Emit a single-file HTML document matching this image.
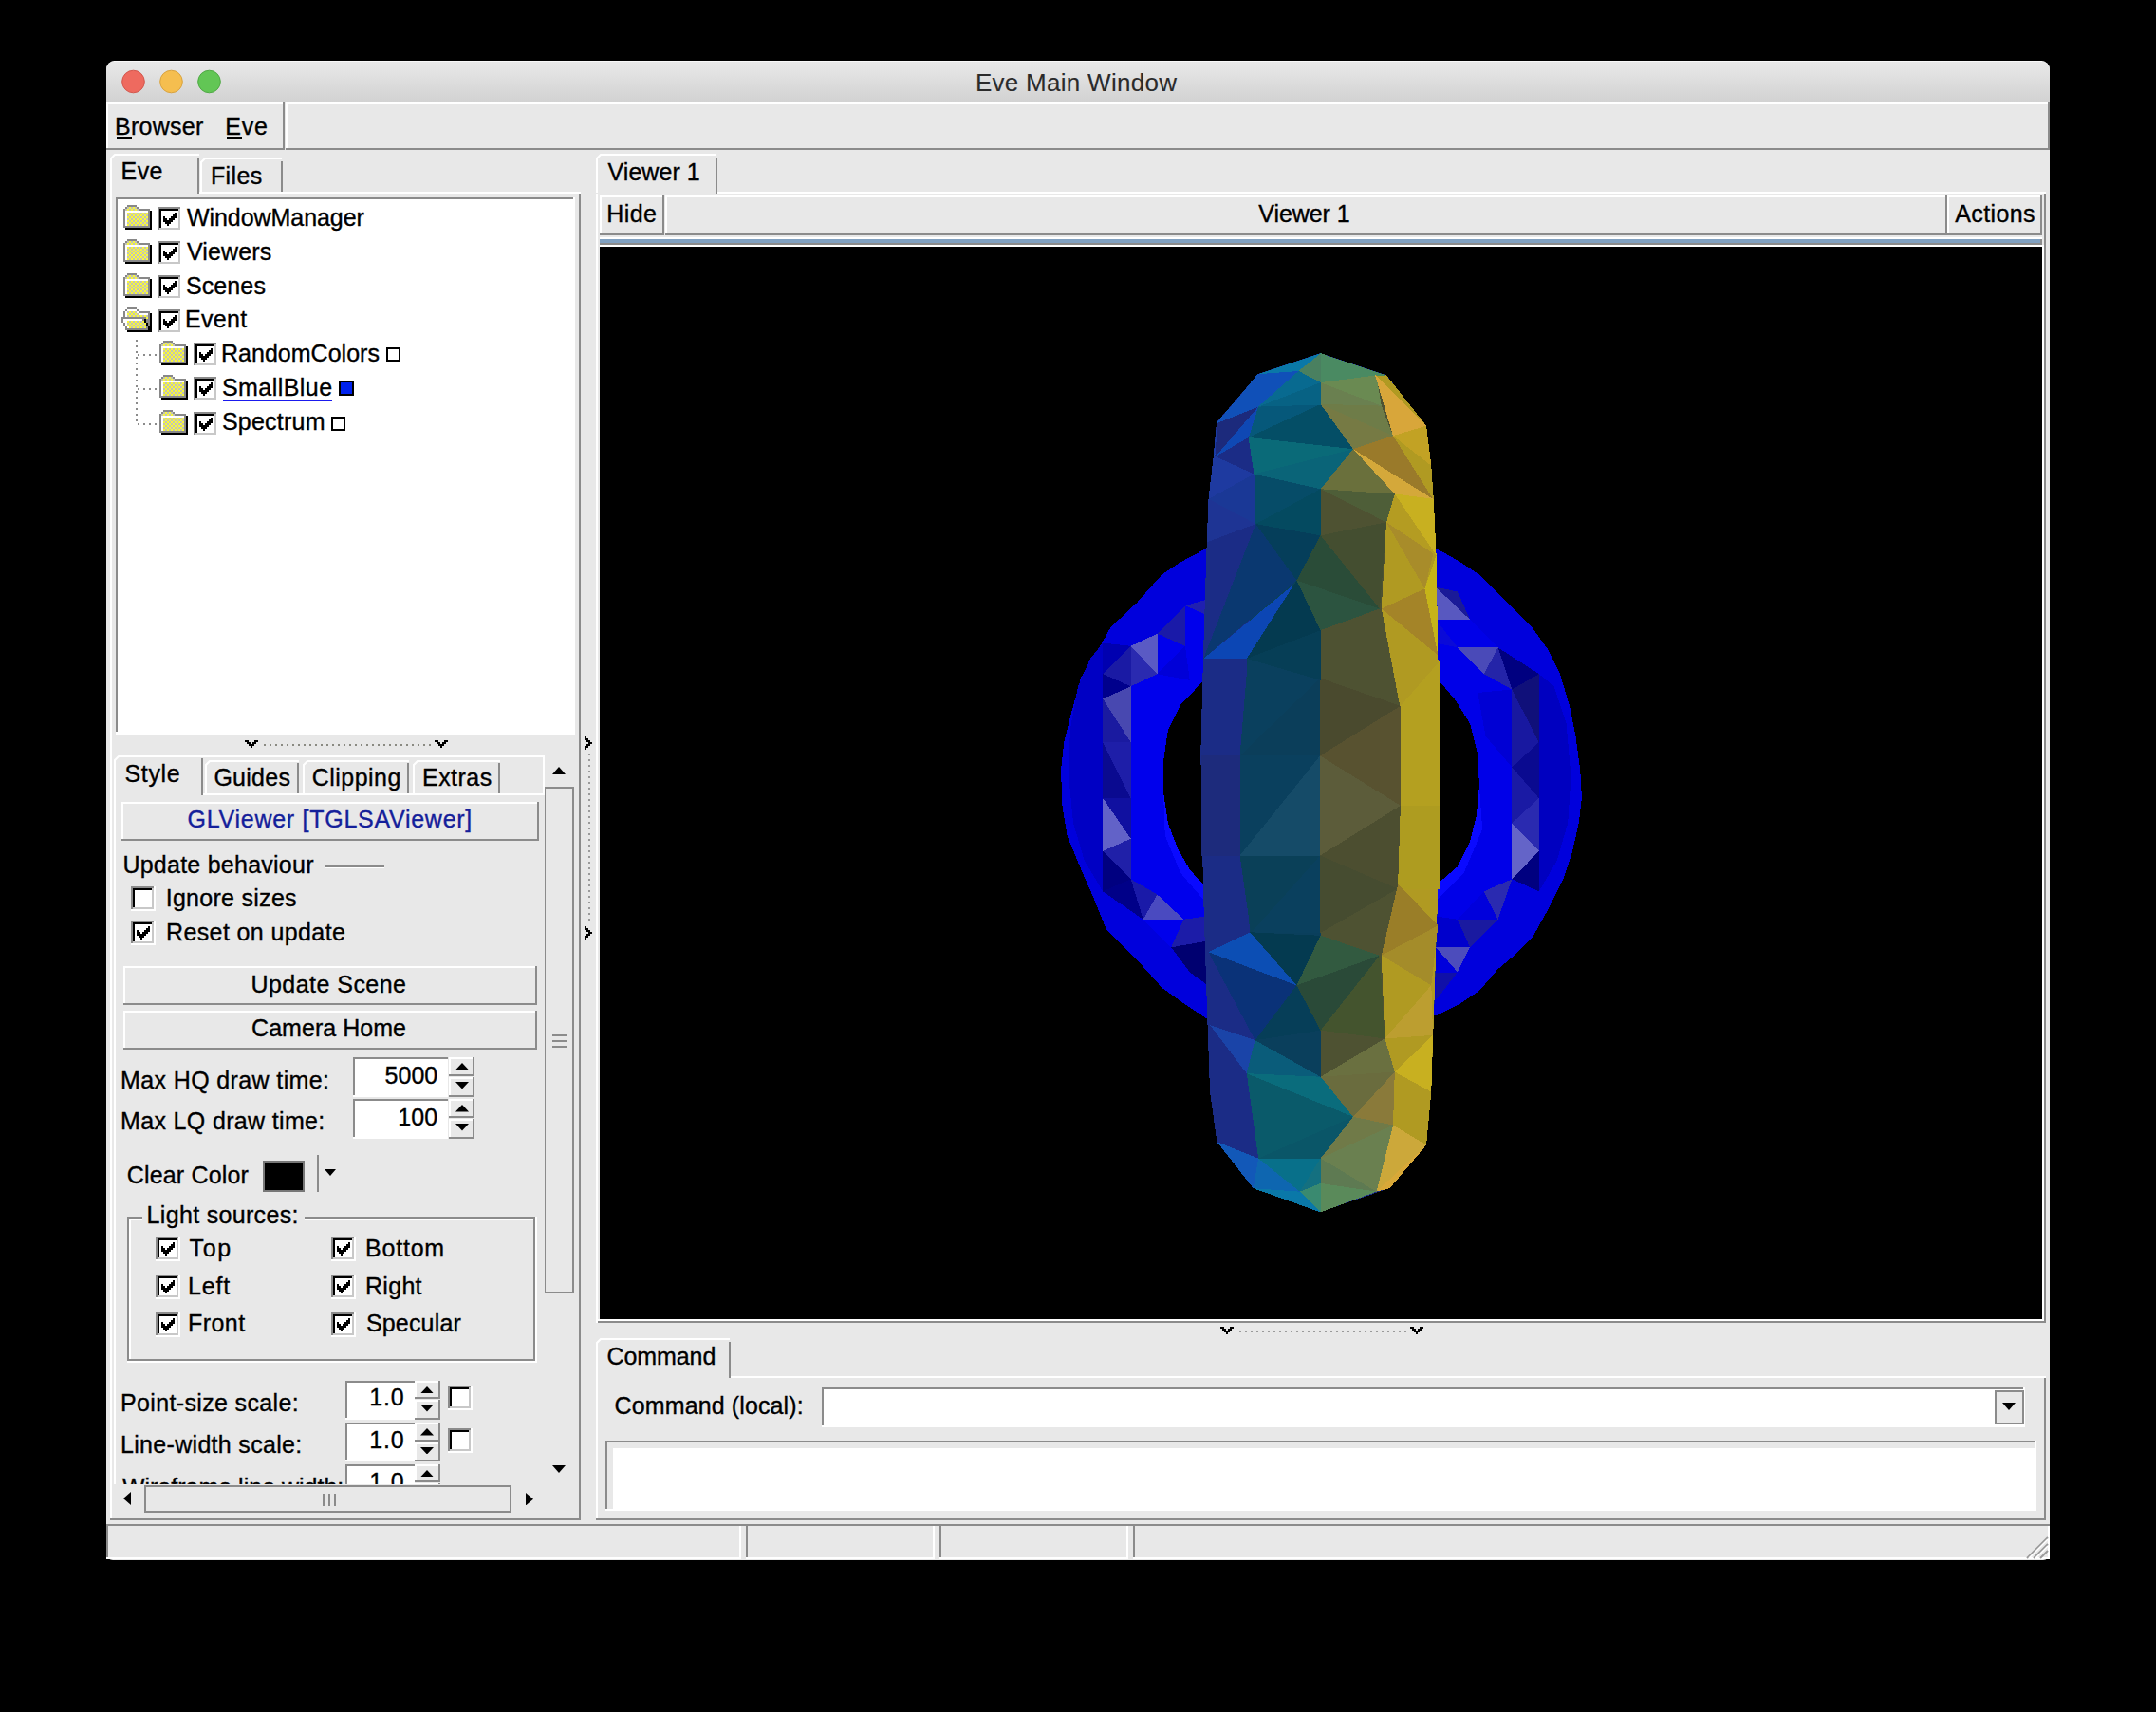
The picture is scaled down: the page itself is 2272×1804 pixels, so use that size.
<!DOCTYPE html>
<html><head><meta charset="utf-8"><style>
html,body{margin:0;padding:0;background:#000;}
body{width:2272px;height:1804px;position:relative;overflow:hidden;font-family:"Liberation Sans",sans-serif;}
#root div,#root svg{position:absolute;}
#root .t{white-space:nowrap;-webkit-text-stroke:0.35px currentColor;}
</style></head><body><div id="root">
<svg width="0" height="0" style="position:absolute"><defs>
<pattern id="chk" width="4" height="4" patternUnits="userSpaceOnUse"><rect width="4" height="4" fill="#bcbcae"/><rect width="2" height="2" fill="#f6f640"/><rect x="2" y="2" width="2" height="2" fill="#f6f640"/></pattern>
</defs></svg>
<div style="left:112px;top:64px;width:2048px;height:1580px;background:#e8e8e8;border-radius:9px 9px 7px 7px;overflow:hidden"></div>
<div style="left:112px;top:64px;width:2048px;height:43px;background:linear-gradient(#e9e9e9,#d2d2d2);border-radius:9px 9px 0 0"></div>
<div style="left:120px;top:64px;width:2032px;height:1px;background:rgba(255,255,255,0.7);"></div>
<div style="left:112px;top:107px;width:2048px;height:1px;background:#adadad;"></div>
<svg style="left:127.8px;top:73px" width="26" height="26"><circle cx="12.5" cy="13" r="11.8" fill="#ee6a5f" stroke="#d3574d" stroke-width="1"/></svg>
<svg style="left:167.8px;top:73px" width="26" height="26"><circle cx="12.5" cy="13" r="11.8" fill="#f5be4f" stroke="#d9a33e" stroke-width="1"/></svg>
<svg style="left:207.8px;top:73px" width="26" height="26"><circle cx="12.5" cy="13" r="11.8" fill="#62c655" stroke="#4fa944" stroke-width="1"/></svg>
<div class="t" style="left:1027.90px;top:73.99px;font-size:26.00px;line-height:26.00px;letter-spacing:0.286px;color:#2b2b2b;-webkit-text-stroke:0.1px #2b2b2b">Eve Main Window</div>
<div style="left:112px;top:108px;width:186px;height:2px;background:#ffffff;"></div>
<div style="left:112px;top:108px;width:2px;height:48px;background:#ffffff;"></div>
<div style="left:112px;top:156px;width:188px;height:2px;background:#8b8b8b;"></div>
<div style="left:298px;top:108px;width:2px;height:50px;background:#8b8b8b;"></div>
<div style="left:301px;top:108px;width:1857px;height:2px;background:#ffffff;"></div>
<div style="left:301px;top:108px;width:2px;height:48px;background:#ffffff;"></div>
<div style="left:301px;top:156px;width:1859px;height:2px;background:#8b8b8b;"></div>
<div style="left:2158px;top:108px;width:2px;height:50px;background:#8b8b8b;"></div>
<div class="t" style="left:121.00px;top:121.04px;font-size:25.00px;line-height:25.00px;letter-spacing:0.283px;color:#000;">Browser</div>
<div style="left:123px;top:144px;width:16px;height:2px;background:#000;"></div>
<div class="t" style="left:237.30px;top:121.04px;font-size:25.00px;line-height:25.00px;letter-spacing:0.750px;color:#000;">Eve</div>
<div style="left:239.3px;top:144px;width:15.7px;height:2px;background:#000;"></div>
<div style="left:116px;top:204px;width:2px;height:1398px;background:#ffffff;"></div>
<div style="left:210px;top:202px;width:402px;height:2px;background:#ffffff;"></div>
<div style="left:610px;top:204px;width:2px;height:1398px;background:#8b8b8b;"></div>
<div style="left:116px;top:1600px;width:496px;height:2px;background:#8b8b8b;"></div>
<svg style="left:116px;top:162px" width="96" height="44"><polyline points="1,43 1,5 5,1 94,1" fill="none" stroke="#fff" stroke-width="2"/></svg>
<div style="left:208px;top:166px;width:2px;height:38px;background:#8b8b8b;"></div>
<div class="t" style="left:127.60px;top:168.34px;font-size:25.00px;line-height:25.00px;letter-spacing:0.400px;color:#000;">Eve</div>
<svg style="left:211px;top:166px" width="88" height="38"><polyline points="1,37 1,5 5,1 86,1" fill="none" stroke="#fff" stroke-width="2"/></svg>
<div style="left:296px;top:170px;width:2px;height:32px;background:#8b8b8b;"></div>
<div class="t" style="left:222.00px;top:172.54px;font-size:25.00px;line-height:25.00px;letter-spacing:0.350px;color:#000;">Files</div>
<div style="left:122px;top:208px;width:484px;height:566px;background:#fff;"></div>
<div style="left:122px;top:208px;width:482px;height:2px;background:#8b8b8b;"></div>
<div style="left:122px;top:208px;width:2px;height:563px;background:#8b8b8b;"></div>
<svg style="left:130px;top:216px" width="30" height="26" shape-rendering="crispEdges"><rect x="4" y="0" width="10" height="2" fill="#888888"/><rect x="2" y="2" width="2" height="2" fill="#888888"/><rect x="4" y="2" width="2" height="2" fill="#c4c4b4"/><rect x="6" y="2" width="2" height="2" fill="#f8f83c"/><rect x="8" y="2" width="2" height="2" fill="#c4c4b4"/><rect x="10" y="2" width="2" height="2" fill="#f8f83c"/><rect x="12" y="2" width="2" height="2" fill="#c4c4b4"/><rect x="14" y="2" width="2" height="2" fill="#888888"/><rect x="0" y="4" width="2" height="2" fill="#888888"/><rect x="2" y="4" width="2" height="2" fill="#c4c4b4"/><rect x="4" y="4" width="2" height="2" fill="#f8f83c"/><rect x="6" y="4" width="2" height="2" fill="#c4c4b4"/><rect x="8" y="4" width="2" height="2" fill="#f8f83c"/><rect x="10" y="4" width="2" height="2" fill="#c4c4b4"/><rect x="12" y="4" width="2" height="2" fill="#f8f83c"/><rect x="14" y="4" width="2" height="2" fill="#c4c4b4"/><rect x="16" y="4" width="12" height="2" fill="#888888"/><rect x="0" y="6" width="2" height="2" fill="#888888"/><rect x="2" y="6" width="24" height="2" fill="#ffffff"/><rect x="26" y="6" width="2" height="2" fill="#888888"/><rect x="28" y="6" width="2" height="2" fill="#000000"/><rect x="0" y="8" width="2" height="2" fill="#888888"/><rect x="2" y="8" width="2" height="2" fill="#ffffff"/><rect x="4" y="8" width="2" height="2" fill="#f8f83c"/><rect x="6" y="8" width="2" height="2" fill="#c4c4b4"/><rect x="8" y="8" width="2" height="2" fill="#f8f83c"/><rect x="10" y="8" width="2" height="2" fill="#c4c4b4"/><rect x="12" y="8" width="2" height="2" fill="#f8f83c"/><rect x="14" y="8" width="2" height="2" fill="#c4c4b4"/><rect x="16" y="8" width="2" height="2" fill="#f8f83c"/><rect x="18" y="8" width="2" height="2" fill="#c4c4b4"/><rect x="20" y="8" width="2" height="2" fill="#f8f83c"/><rect x="22" y="8" width="2" height="2" fill="#c4c4b4"/><rect x="24" y="8" width="2" height="2" fill="#f8f83c"/><rect x="26" y="8" width="2" height="2" fill="#888888"/><rect x="28" y="8" width="2" height="2" fill="#000000"/><rect x="0" y="10" width="2" height="2" fill="#888888"/><rect x="2" y="10" width="2" height="2" fill="#ffffff"/><rect x="4" y="10" width="2" height="2" fill="#c4c4b4"/><rect x="6" y="10" width="2" height="2" fill="#f8f83c"/><rect x="8" y="10" width="2" height="2" fill="#c4c4b4"/><rect x="10" y="10" width="2" height="2" fill="#f8f83c"/><rect x="12" y="10" width="2" height="2" fill="#c4c4b4"/><rect x="14" y="10" width="2" height="2" fill="#f8f83c"/><rect x="16" y="10" width="2" height="2" fill="#c4c4b4"/><rect x="18" y="10" width="2" height="2" fill="#f8f83c"/><rect x="20" y="10" width="2" height="2" fill="#c4c4b4"/><rect x="22" y="10" width="2" height="2" fill="#f8f83c"/><rect x="24" y="10" width="2" height="2" fill="#c4c4b4"/><rect x="26" y="10" width="2" height="2" fill="#888888"/><rect x="28" y="10" width="2" height="2" fill="#000000"/><rect x="0" y="12" width="2" height="2" fill="#888888"/><rect x="2" y="12" width="2" height="2" fill="#ffffff"/><rect x="4" y="12" width="2" height="2" fill="#f8f83c"/><rect x="6" y="12" width="2" height="2" fill="#c4c4b4"/><rect x="8" y="12" width="2" height="2" fill="#f8f83c"/><rect x="10" y="12" width="2" height="2" fill="#c4c4b4"/><rect x="12" y="12" width="2" height="2" fill="#f8f83c"/><rect x="14" y="12" width="2" height="2" fill="#c4c4b4"/><rect x="16" y="12" width="2" height="2" fill="#f8f83c"/><rect x="18" y="12" width="2" height="2" fill="#c4c4b4"/><rect x="20" y="12" width="2" height="2" fill="#f8f83c"/><rect x="22" y="12" width="2" height="2" fill="#c4c4b4"/><rect x="24" y="12" width="2" height="2" fill="#f8f83c"/><rect x="26" y="12" width="2" height="2" fill="#888888"/><rect x="28" y="12" width="2" height="2" fill="#000000"/><rect x="0" y="14" width="2" height="2" fill="#888888"/><rect x="2" y="14" width="2" height="2" fill="#ffffff"/><rect x="4" y="14" width="2" height="2" fill="#c4c4b4"/><rect x="6" y="14" width="2" height="2" fill="#f8f83c"/><rect x="8" y="14" width="2" height="2" fill="#c4c4b4"/><rect x="10" y="14" width="2" height="2" fill="#f8f83c"/><rect x="12" y="14" width="2" height="2" fill="#c4c4b4"/><rect x="14" y="14" width="2" height="2" fill="#f8f83c"/><rect x="16" y="14" width="2" height="2" fill="#c4c4b4"/><rect x="18" y="14" width="2" height="2" fill="#f8f83c"/><rect x="20" y="14" width="2" height="2" fill="#c4c4b4"/><rect x="22" y="14" width="2" height="2" fill="#f8f83c"/><rect x="24" y="14" width="2" height="2" fill="#c4c4b4"/><rect x="26" y="14" width="2" height="2" fill="#888888"/><rect x="28" y="14" width="2" height="2" fill="#000000"/><rect x="0" y="16" width="2" height="2" fill="#888888"/><rect x="2" y="16" width="2" height="2" fill="#ffffff"/><rect x="4" y="16" width="2" height="2" fill="#f8f83c"/><rect x="6" y="16" width="2" height="2" fill="#c4c4b4"/><rect x="8" y="16" width="2" height="2" fill="#f8f83c"/><rect x="10" y="16" width="2" height="2" fill="#c4c4b4"/><rect x="12" y="16" width="2" height="2" fill="#f8f83c"/><rect x="14" y="16" width="2" height="2" fill="#c4c4b4"/><rect x="16" y="16" width="2" height="2" fill="#f8f83c"/><rect x="18" y="16" width="2" height="2" fill="#c4c4b4"/><rect x="20" y="16" width="2" height="2" fill="#f8f83c"/><rect x="22" y="16" width="2" height="2" fill="#c4c4b4"/><rect x="24" y="16" width="2" height="2" fill="#f8f83c"/><rect x="26" y="16" width="2" height="2" fill="#888888"/><rect x="28" y="16" width="2" height="2" fill="#000000"/><rect x="0" y="18" width="2" height="2" fill="#888888"/><rect x="2" y="18" width="2" height="2" fill="#ffffff"/><rect x="4" y="18" width="2" height="2" fill="#c4c4b4"/><rect x="6" y="18" width="2" height="2" fill="#f8f83c"/><rect x="8" y="18" width="2" height="2" fill="#c4c4b4"/><rect x="10" y="18" width="2" height="2" fill="#f8f83c"/><rect x="12" y="18" width="2" height="2" fill="#c4c4b4"/><rect x="14" y="18" width="2" height="2" fill="#f8f83c"/><rect x="16" y="18" width="2" height="2" fill="#c4c4b4"/><rect x="18" y="18" width="2" height="2" fill="#f8f83c"/><rect x="20" y="18" width="2" height="2" fill="#c4c4b4"/><rect x="22" y="18" width="2" height="2" fill="#f8f83c"/><rect x="24" y="18" width="2" height="2" fill="#c4c4b4"/><rect x="26" y="18" width="2" height="2" fill="#888888"/><rect x="28" y="18" width="2" height="2" fill="#000000"/><rect x="0" y="20" width="2" height="2" fill="#888888"/><rect x="2" y="20" width="2" height="2" fill="#ffffff"/><rect x="4" y="20" width="2" height="2" fill="#f8f83c"/><rect x="6" y="20" width="2" height="2" fill="#c4c4b4"/><rect x="8" y="20" width="2" height="2" fill="#f8f83c"/><rect x="10" y="20" width="2" height="2" fill="#c4c4b4"/><rect x="12" y="20" width="2" height="2" fill="#f8f83c"/><rect x="14" y="20" width="2" height="2" fill="#c4c4b4"/><rect x="16" y="20" width="2" height="2" fill="#f8f83c"/><rect x="18" y="20" width="2" height="2" fill="#c4c4b4"/><rect x="20" y="20" width="2" height="2" fill="#f8f83c"/><rect x="22" y="20" width="2" height="2" fill="#c4c4b4"/><rect x="24" y="20" width="2" height="2" fill="#f8f83c"/><rect x="26" y="20" width="2" height="2" fill="#888888"/><rect x="28" y="20" width="2" height="2" fill="#000000"/><rect x="0" y="22" width="28" height="2" fill="#888888"/><rect x="28" y="22" width="2" height="2" fill="#000000"/><rect x="2" y="24" width="28" height="2" fill="#000000"/></svg>
<svg style="left:166px;top:218px" width="26" height="26"><rect x="0" y="0" width="24" height="24" fill="#fff"/><rect x="0" y="0" width="24" height="2" fill="#8b8b8b"/><rect x="0" y="0" width="2" height="24" fill="#8b8b8b"/><rect x="2" y="2" width="20" height="2" fill="#000"/><rect x="2" y="2" width="2" height="20" fill="#000"/><rect x="2" y="22" width="22" height="2" fill="#c8c8c8"/><rect x="22" y="2" width="2" height="22" fill="#c8c8c8"/><rect x="0" y="24" width="26" height="2" fill="#fff"/><rect x="24" y="0" width="2" height="26" fill="#fff"/><polygon points="6,10 8,10 8,12 10,12 10,14 12,14 12,12 14,12 14,10 16,10 16,8 18,8 18,6 20,6 20,12 18,12 18,14 16,14 16,16 14,16 14,18 12,18 12,20 10,20 10,18 8,18 8,16 6,16" fill="#000"/></svg>
<div class="t" style="left:196.90px;top:216.84px;font-size:25.00px;line-height:25.00px;letter-spacing:-0.050px;color:#000;">WindowManager</div>
<svg style="left:130px;top:252px" width="30" height="26" shape-rendering="crispEdges"><rect x="4" y="0" width="10" height="2" fill="#888888"/><rect x="2" y="2" width="2" height="2" fill="#888888"/><rect x="4" y="2" width="2" height="2" fill="#c4c4b4"/><rect x="6" y="2" width="2" height="2" fill="#f8f83c"/><rect x="8" y="2" width="2" height="2" fill="#c4c4b4"/><rect x="10" y="2" width="2" height="2" fill="#f8f83c"/><rect x="12" y="2" width="2" height="2" fill="#c4c4b4"/><rect x="14" y="2" width="2" height="2" fill="#888888"/><rect x="0" y="4" width="2" height="2" fill="#888888"/><rect x="2" y="4" width="2" height="2" fill="#c4c4b4"/><rect x="4" y="4" width="2" height="2" fill="#f8f83c"/><rect x="6" y="4" width="2" height="2" fill="#c4c4b4"/><rect x="8" y="4" width="2" height="2" fill="#f8f83c"/><rect x="10" y="4" width="2" height="2" fill="#c4c4b4"/><rect x="12" y="4" width="2" height="2" fill="#f8f83c"/><rect x="14" y="4" width="2" height="2" fill="#c4c4b4"/><rect x="16" y="4" width="12" height="2" fill="#888888"/><rect x="0" y="6" width="2" height="2" fill="#888888"/><rect x="2" y="6" width="24" height="2" fill="#ffffff"/><rect x="26" y="6" width="2" height="2" fill="#888888"/><rect x="28" y="6" width="2" height="2" fill="#000000"/><rect x="0" y="8" width="2" height="2" fill="#888888"/><rect x="2" y="8" width="2" height="2" fill="#ffffff"/><rect x="4" y="8" width="2" height="2" fill="#f8f83c"/><rect x="6" y="8" width="2" height="2" fill="#c4c4b4"/><rect x="8" y="8" width="2" height="2" fill="#f8f83c"/><rect x="10" y="8" width="2" height="2" fill="#c4c4b4"/><rect x="12" y="8" width="2" height="2" fill="#f8f83c"/><rect x="14" y="8" width="2" height="2" fill="#c4c4b4"/><rect x="16" y="8" width="2" height="2" fill="#f8f83c"/><rect x="18" y="8" width="2" height="2" fill="#c4c4b4"/><rect x="20" y="8" width="2" height="2" fill="#f8f83c"/><rect x="22" y="8" width="2" height="2" fill="#c4c4b4"/><rect x="24" y="8" width="2" height="2" fill="#f8f83c"/><rect x="26" y="8" width="2" height="2" fill="#888888"/><rect x="28" y="8" width="2" height="2" fill="#000000"/><rect x="0" y="10" width="2" height="2" fill="#888888"/><rect x="2" y="10" width="2" height="2" fill="#ffffff"/><rect x="4" y="10" width="2" height="2" fill="#c4c4b4"/><rect x="6" y="10" width="2" height="2" fill="#f8f83c"/><rect x="8" y="10" width="2" height="2" fill="#c4c4b4"/><rect x="10" y="10" width="2" height="2" fill="#f8f83c"/><rect x="12" y="10" width="2" height="2" fill="#c4c4b4"/><rect x="14" y="10" width="2" height="2" fill="#f8f83c"/><rect x="16" y="10" width="2" height="2" fill="#c4c4b4"/><rect x="18" y="10" width="2" height="2" fill="#f8f83c"/><rect x="20" y="10" width="2" height="2" fill="#c4c4b4"/><rect x="22" y="10" width="2" height="2" fill="#f8f83c"/><rect x="24" y="10" width="2" height="2" fill="#c4c4b4"/><rect x="26" y="10" width="2" height="2" fill="#888888"/><rect x="28" y="10" width="2" height="2" fill="#000000"/><rect x="0" y="12" width="2" height="2" fill="#888888"/><rect x="2" y="12" width="2" height="2" fill="#ffffff"/><rect x="4" y="12" width="2" height="2" fill="#f8f83c"/><rect x="6" y="12" width="2" height="2" fill="#c4c4b4"/><rect x="8" y="12" width="2" height="2" fill="#f8f83c"/><rect x="10" y="12" width="2" height="2" fill="#c4c4b4"/><rect x="12" y="12" width="2" height="2" fill="#f8f83c"/><rect x="14" y="12" width="2" height="2" fill="#c4c4b4"/><rect x="16" y="12" width="2" height="2" fill="#f8f83c"/><rect x="18" y="12" width="2" height="2" fill="#c4c4b4"/><rect x="20" y="12" width="2" height="2" fill="#f8f83c"/><rect x="22" y="12" width="2" height="2" fill="#c4c4b4"/><rect x="24" y="12" width="2" height="2" fill="#f8f83c"/><rect x="26" y="12" width="2" height="2" fill="#888888"/><rect x="28" y="12" width="2" height="2" fill="#000000"/><rect x="0" y="14" width="2" height="2" fill="#888888"/><rect x="2" y="14" width="2" height="2" fill="#ffffff"/><rect x="4" y="14" width="2" height="2" fill="#c4c4b4"/><rect x="6" y="14" width="2" height="2" fill="#f8f83c"/><rect x="8" y="14" width="2" height="2" fill="#c4c4b4"/><rect x="10" y="14" width="2" height="2" fill="#f8f83c"/><rect x="12" y="14" width="2" height="2" fill="#c4c4b4"/><rect x="14" y="14" width="2" height="2" fill="#f8f83c"/><rect x="16" y="14" width="2" height="2" fill="#c4c4b4"/><rect x="18" y="14" width="2" height="2" fill="#f8f83c"/><rect x="20" y="14" width="2" height="2" fill="#c4c4b4"/><rect x="22" y="14" width="2" height="2" fill="#f8f83c"/><rect x="24" y="14" width="2" height="2" fill="#c4c4b4"/><rect x="26" y="14" width="2" height="2" fill="#888888"/><rect x="28" y="14" width="2" height="2" fill="#000000"/><rect x="0" y="16" width="2" height="2" fill="#888888"/><rect x="2" y="16" width="2" height="2" fill="#ffffff"/><rect x="4" y="16" width="2" height="2" fill="#f8f83c"/><rect x="6" y="16" width="2" height="2" fill="#c4c4b4"/><rect x="8" y="16" width="2" height="2" fill="#f8f83c"/><rect x="10" y="16" width="2" height="2" fill="#c4c4b4"/><rect x="12" y="16" width="2" height="2" fill="#f8f83c"/><rect x="14" y="16" width="2" height="2" fill="#c4c4b4"/><rect x="16" y="16" width="2" height="2" fill="#f8f83c"/><rect x="18" y="16" width="2" height="2" fill="#c4c4b4"/><rect x="20" y="16" width="2" height="2" fill="#f8f83c"/><rect x="22" y="16" width="2" height="2" fill="#c4c4b4"/><rect x="24" y="16" width="2" height="2" fill="#f8f83c"/><rect x="26" y="16" width="2" height="2" fill="#888888"/><rect x="28" y="16" width="2" height="2" fill="#000000"/><rect x="0" y="18" width="2" height="2" fill="#888888"/><rect x="2" y="18" width="2" height="2" fill="#ffffff"/><rect x="4" y="18" width="2" height="2" fill="#c4c4b4"/><rect x="6" y="18" width="2" height="2" fill="#f8f83c"/><rect x="8" y="18" width="2" height="2" fill="#c4c4b4"/><rect x="10" y="18" width="2" height="2" fill="#f8f83c"/><rect x="12" y="18" width="2" height="2" fill="#c4c4b4"/><rect x="14" y="18" width="2" height="2" fill="#f8f83c"/><rect x="16" y="18" width="2" height="2" fill="#c4c4b4"/><rect x="18" y="18" width="2" height="2" fill="#f8f83c"/><rect x="20" y="18" width="2" height="2" fill="#c4c4b4"/><rect x="22" y="18" width="2" height="2" fill="#f8f83c"/><rect x="24" y="18" width="2" height="2" fill="#c4c4b4"/><rect x="26" y="18" width="2" height="2" fill="#888888"/><rect x="28" y="18" width="2" height="2" fill="#000000"/><rect x="0" y="20" width="2" height="2" fill="#888888"/><rect x="2" y="20" width="2" height="2" fill="#ffffff"/><rect x="4" y="20" width="2" height="2" fill="#f8f83c"/><rect x="6" y="20" width="2" height="2" fill="#c4c4b4"/><rect x="8" y="20" width="2" height="2" fill="#f8f83c"/><rect x="10" y="20" width="2" height="2" fill="#c4c4b4"/><rect x="12" y="20" width="2" height="2" fill="#f8f83c"/><rect x="14" y="20" width="2" height="2" fill="#c4c4b4"/><rect x="16" y="20" width="2" height="2" fill="#f8f83c"/><rect x="18" y="20" width="2" height="2" fill="#c4c4b4"/><rect x="20" y="20" width="2" height="2" fill="#f8f83c"/><rect x="22" y="20" width="2" height="2" fill="#c4c4b4"/><rect x="24" y="20" width="2" height="2" fill="#f8f83c"/><rect x="26" y="20" width="2" height="2" fill="#888888"/><rect x="28" y="20" width="2" height="2" fill="#000000"/><rect x="0" y="22" width="28" height="2" fill="#888888"/><rect x="28" y="22" width="2" height="2" fill="#000000"/><rect x="2" y="24" width="28" height="2" fill="#000000"/></svg>
<svg style="left:166px;top:254px" width="26" height="26"><rect x="0" y="0" width="24" height="24" fill="#fff"/><rect x="0" y="0" width="24" height="2" fill="#8b8b8b"/><rect x="0" y="0" width="2" height="24" fill="#8b8b8b"/><rect x="2" y="2" width="20" height="2" fill="#000"/><rect x="2" y="2" width="2" height="20" fill="#000"/><rect x="2" y="22" width="22" height="2" fill="#c8c8c8"/><rect x="22" y="2" width="2" height="22" fill="#c8c8c8"/><rect x="0" y="24" width="26" height="2" fill="#fff"/><rect x="24" y="0" width="2" height="26" fill="#fff"/><polygon points="6,10 8,10 8,12 10,12 10,14 12,14 12,12 14,12 14,10 16,10 16,8 18,8 18,6 20,6 20,12 18,12 18,14 16,14 16,16 14,16 14,18 12,18 12,20 10,20 10,18 8,18 8,16 6,16" fill="#000"/></svg>
<div class="t" style="left:196.90px;top:252.84px;font-size:25.00px;line-height:25.00px;letter-spacing:0.133px;color:#000;">Viewers</div>
<svg style="left:130px;top:288px" width="30" height="26" shape-rendering="crispEdges"><rect x="4" y="0" width="10" height="2" fill="#888888"/><rect x="2" y="2" width="2" height="2" fill="#888888"/><rect x="4" y="2" width="2" height="2" fill="#c4c4b4"/><rect x="6" y="2" width="2" height="2" fill="#f8f83c"/><rect x="8" y="2" width="2" height="2" fill="#c4c4b4"/><rect x="10" y="2" width="2" height="2" fill="#f8f83c"/><rect x="12" y="2" width="2" height="2" fill="#c4c4b4"/><rect x="14" y="2" width="2" height="2" fill="#888888"/><rect x="0" y="4" width="2" height="2" fill="#888888"/><rect x="2" y="4" width="2" height="2" fill="#c4c4b4"/><rect x="4" y="4" width="2" height="2" fill="#f8f83c"/><rect x="6" y="4" width="2" height="2" fill="#c4c4b4"/><rect x="8" y="4" width="2" height="2" fill="#f8f83c"/><rect x="10" y="4" width="2" height="2" fill="#c4c4b4"/><rect x="12" y="4" width="2" height="2" fill="#f8f83c"/><rect x="14" y="4" width="2" height="2" fill="#c4c4b4"/><rect x="16" y="4" width="12" height="2" fill="#888888"/><rect x="0" y="6" width="2" height="2" fill="#888888"/><rect x="2" y="6" width="24" height="2" fill="#ffffff"/><rect x="26" y="6" width="2" height="2" fill="#888888"/><rect x="28" y="6" width="2" height="2" fill="#000000"/><rect x="0" y="8" width="2" height="2" fill="#888888"/><rect x="2" y="8" width="2" height="2" fill="#ffffff"/><rect x="4" y="8" width="2" height="2" fill="#f8f83c"/><rect x="6" y="8" width="2" height="2" fill="#c4c4b4"/><rect x="8" y="8" width="2" height="2" fill="#f8f83c"/><rect x="10" y="8" width="2" height="2" fill="#c4c4b4"/><rect x="12" y="8" width="2" height="2" fill="#f8f83c"/><rect x="14" y="8" width="2" height="2" fill="#c4c4b4"/><rect x="16" y="8" width="2" height="2" fill="#f8f83c"/><rect x="18" y="8" width="2" height="2" fill="#c4c4b4"/><rect x="20" y="8" width="2" height="2" fill="#f8f83c"/><rect x="22" y="8" width="2" height="2" fill="#c4c4b4"/><rect x="24" y="8" width="2" height="2" fill="#f8f83c"/><rect x="26" y="8" width="2" height="2" fill="#888888"/><rect x="28" y="8" width="2" height="2" fill="#000000"/><rect x="0" y="10" width="2" height="2" fill="#888888"/><rect x="2" y="10" width="2" height="2" fill="#ffffff"/><rect x="4" y="10" width="2" height="2" fill="#c4c4b4"/><rect x="6" y="10" width="2" height="2" fill="#f8f83c"/><rect x="8" y="10" width="2" height="2" fill="#c4c4b4"/><rect x="10" y="10" width="2" height="2" fill="#f8f83c"/><rect x="12" y="10" width="2" height="2" fill="#c4c4b4"/><rect x="14" y="10" width="2" height="2" fill="#f8f83c"/><rect x="16" y="10" width="2" height="2" fill="#c4c4b4"/><rect x="18" y="10" width="2" height="2" fill="#f8f83c"/><rect x="20" y="10" width="2" height="2" fill="#c4c4b4"/><rect x="22" y="10" width="2" height="2" fill="#f8f83c"/><rect x="24" y="10" width="2" height="2" fill="#c4c4b4"/><rect x="26" y="10" width="2" height="2" fill="#888888"/><rect x="28" y="10" width="2" height="2" fill="#000000"/><rect x="0" y="12" width="2" height="2" fill="#888888"/><rect x="2" y="12" width="2" height="2" fill="#ffffff"/><rect x="4" y="12" width="2" height="2" fill="#f8f83c"/><rect x="6" y="12" width="2" height="2" fill="#c4c4b4"/><rect x="8" y="12" width="2" height="2" fill="#f8f83c"/><rect x="10" y="12" width="2" height="2" fill="#c4c4b4"/><rect x="12" y="12" width="2" height="2" fill="#f8f83c"/><rect x="14" y="12" width="2" height="2" fill="#c4c4b4"/><rect x="16" y="12" width="2" height="2" fill="#f8f83c"/><rect x="18" y="12" width="2" height="2" fill="#c4c4b4"/><rect x="20" y="12" width="2" height="2" fill="#f8f83c"/><rect x="22" y="12" width="2" height="2" fill="#c4c4b4"/><rect x="24" y="12" width="2" height="2" fill="#f8f83c"/><rect x="26" y="12" width="2" height="2" fill="#888888"/><rect x="28" y="12" width="2" height="2" fill="#000000"/><rect x="0" y="14" width="2" height="2" fill="#888888"/><rect x="2" y="14" width="2" height="2" fill="#ffffff"/><rect x="4" y="14" width="2" height="2" fill="#c4c4b4"/><rect x="6" y="14" width="2" height="2" fill="#f8f83c"/><rect x="8" y="14" width="2" height="2" fill="#c4c4b4"/><rect x="10" y="14" width="2" height="2" fill="#f8f83c"/><rect x="12" y="14" width="2" height="2" fill="#c4c4b4"/><rect x="14" y="14" width="2" height="2" fill="#f8f83c"/><rect x="16" y="14" width="2" height="2" fill="#c4c4b4"/><rect x="18" y="14" width="2" height="2" fill="#f8f83c"/><rect x="20" y="14" width="2" height="2" fill="#c4c4b4"/><rect x="22" y="14" width="2" height="2" fill="#f8f83c"/><rect x="24" y="14" width="2" height="2" fill="#c4c4b4"/><rect x="26" y="14" width="2" height="2" fill="#888888"/><rect x="28" y="14" width="2" height="2" fill="#000000"/><rect x="0" y="16" width="2" height="2" fill="#888888"/><rect x="2" y="16" width="2" height="2" fill="#ffffff"/><rect x="4" y="16" width="2" height="2" fill="#f8f83c"/><rect x="6" y="16" width="2" height="2" fill="#c4c4b4"/><rect x="8" y="16" width="2" height="2" fill="#f8f83c"/><rect x="10" y="16" width="2" height="2" fill="#c4c4b4"/><rect x="12" y="16" width="2" height="2" fill="#f8f83c"/><rect x="14" y="16" width="2" height="2" fill="#c4c4b4"/><rect x="16" y="16" width="2" height="2" fill="#f8f83c"/><rect x="18" y="16" width="2" height="2" fill="#c4c4b4"/><rect x="20" y="16" width="2" height="2" fill="#f8f83c"/><rect x="22" y="16" width="2" height="2" fill="#c4c4b4"/><rect x="24" y="16" width="2" height="2" fill="#f8f83c"/><rect x="26" y="16" width="2" height="2" fill="#888888"/><rect x="28" y="16" width="2" height="2" fill="#000000"/><rect x="0" y="18" width="2" height="2" fill="#888888"/><rect x="2" y="18" width="2" height="2" fill="#ffffff"/><rect x="4" y="18" width="2" height="2" fill="#c4c4b4"/><rect x="6" y="18" width="2" height="2" fill="#f8f83c"/><rect x="8" y="18" width="2" height="2" fill="#c4c4b4"/><rect x="10" y="18" width="2" height="2" fill="#f8f83c"/><rect x="12" y="18" width="2" height="2" fill="#c4c4b4"/><rect x="14" y="18" width="2" height="2" fill="#f8f83c"/><rect x="16" y="18" width="2" height="2" fill="#c4c4b4"/><rect x="18" y="18" width="2" height="2" fill="#f8f83c"/><rect x="20" y="18" width="2" height="2" fill="#c4c4b4"/><rect x="22" y="18" width="2" height="2" fill="#f8f83c"/><rect x="24" y="18" width="2" height="2" fill="#c4c4b4"/><rect x="26" y="18" width="2" height="2" fill="#888888"/><rect x="28" y="18" width="2" height="2" fill="#000000"/><rect x="0" y="20" width="2" height="2" fill="#888888"/><rect x="2" y="20" width="2" height="2" fill="#ffffff"/><rect x="4" y="20" width="2" height="2" fill="#f8f83c"/><rect x="6" y="20" width="2" height="2" fill="#c4c4b4"/><rect x="8" y="20" width="2" height="2" fill="#f8f83c"/><rect x="10" y="20" width="2" height="2" fill="#c4c4b4"/><rect x="12" y="20" width="2" height="2" fill="#f8f83c"/><rect x="14" y="20" width="2" height="2" fill="#c4c4b4"/><rect x="16" y="20" width="2" height="2" fill="#f8f83c"/><rect x="18" y="20" width="2" height="2" fill="#c4c4b4"/><rect x="20" y="20" width="2" height="2" fill="#f8f83c"/><rect x="22" y="20" width="2" height="2" fill="#c4c4b4"/><rect x="24" y="20" width="2" height="2" fill="#f8f83c"/><rect x="26" y="20" width="2" height="2" fill="#888888"/><rect x="28" y="20" width="2" height="2" fill="#000000"/><rect x="0" y="22" width="28" height="2" fill="#888888"/><rect x="28" y="22" width="2" height="2" fill="#000000"/><rect x="2" y="24" width="28" height="2" fill="#000000"/></svg>
<svg style="left:166px;top:290px" width="26" height="26"><rect x="0" y="0" width="24" height="24" fill="#fff"/><rect x="0" y="0" width="24" height="2" fill="#8b8b8b"/><rect x="0" y="0" width="2" height="24" fill="#8b8b8b"/><rect x="2" y="2" width="20" height="2" fill="#000"/><rect x="2" y="2" width="2" height="20" fill="#000"/><rect x="2" y="22" width="22" height="2" fill="#c8c8c8"/><rect x="22" y="2" width="2" height="22" fill="#c8c8c8"/><rect x="0" y="24" width="26" height="2" fill="#fff"/><rect x="24" y="0" width="2" height="26" fill="#fff"/><polygon points="6,10 8,10 8,12 10,12 10,14 12,14 12,12 14,12 14,10 16,10 16,8 18,8 18,6 20,6 20,12 18,12 18,14 16,14 16,16 14,16 14,18 12,18 12,20 10,20 10,18 8,18 8,16 6,16" fill="#000"/></svg>
<div class="t" style="left:195.90px;top:288.84px;font-size:25.00px;line-height:25.00px;letter-spacing:0.120px;color:#000;">Scenes</div>
<svg style="left:128px;top:323.5px" width="32" height="26" shape-rendering="crispEdges"><rect x="6" y="0" width="10" height="2" fill="#888888"/><rect x="4" y="2" width="2" height="2" fill="#888888"/><rect x="6" y="2" width="10" height="2" fill="#ffffff"/><rect x="16" y="2" width="2" height="2" fill="#888888"/><rect x="2" y="4" width="2" height="2" fill="#888888"/><rect x="4" y="4" width="2" height="2" fill="#ffffff"/><rect x="6" y="4" width="2" height="2" fill="#c4c4b4"/><rect x="8" y="4" width="2" height="2" fill="#f8f83c"/><rect x="10" y="4" width="2" height="2" fill="#c4c4b4"/><rect x="12" y="4" width="2" height="2" fill="#f8f83c"/><rect x="14" y="4" width="2" height="2" fill="#c4c4b4"/><rect x="16" y="4" width="2" height="2" fill="#ffffff"/><rect x="18" y="4" width="12" height="2" fill="#888888"/><rect x="2" y="6" width="2" height="2" fill="#888888"/><rect x="4" y="6" width="2" height="2" fill="#ffffff"/><rect x="6" y="6" width="2" height="2" fill="#f8f83c"/><rect x="8" y="6" width="2" height="2" fill="#c4c4b4"/><rect x="10" y="6" width="2" height="2" fill="#f8f83c"/><rect x="12" y="6" width="2" height="2" fill="#c4c4b4"/><rect x="14" y="6" width="2" height="2" fill="#f8f83c"/><rect x="16" y="6" width="2" height="2" fill="#c4c4b4"/><rect x="18" y="6" width="10" height="2" fill="#ffffff"/><rect x="28" y="6" width="2" height="2" fill="#888888"/><rect x="30" y="6" width="2" height="2" fill="#000000"/><rect x="2" y="8" width="2" height="2" fill="#888888"/><rect x="4" y="8" width="2" height="2" fill="#ffffff"/><rect x="6" y="8" width="2" height="2" fill="#c4c4b4"/><rect x="8" y="8" width="2" height="2" fill="#f8f83c"/><rect x="10" y="8" width="2" height="2" fill="#c4c4b4"/><rect x="12" y="8" width="2" height="2" fill="#f8f83c"/><rect x="14" y="8" width="2" height="2" fill="#c4c4b4"/><rect x="16" y="8" width="2" height="2" fill="#f8f83c"/><rect x="18" y="8" width="2" height="2" fill="#c4c4b4"/><rect x="20" y="8" width="2" height="2" fill="#f8f83c"/><rect x="22" y="8" width="2" height="2" fill="#c4c4b4"/><rect x="24" y="8" width="2" height="2" fill="#f8f83c"/><rect x="26" y="8" width="2" height="2" fill="#c4c4b4"/><rect x="28" y="8" width="2" height="2" fill="#888888"/><rect x="30" y="8" width="2" height="2" fill="#000000"/><rect x="0" y="10" width="26" height="2" fill="#888888"/><rect x="26" y="10" width="2" height="2" fill="#f8f83c"/><rect x="28" y="10" width="2" height="2" fill="#888888"/><rect x="30" y="10" width="2" height="2" fill="#000000"/><rect x="0" y="12" width="2" height="2" fill="#888888"/><rect x="2" y="12" width="20" height="2" fill="#ffffff"/><rect x="22" y="12" width="2" height="2" fill="#888888"/><rect x="24" y="12" width="2" height="2" fill="#000000"/><rect x="26" y="12" width="4" height="2" fill="#888888"/><rect x="30" y="12" width="2" height="2" fill="#000000"/><rect x="0" y="14" width="2" height="2" fill="#888888"/><rect x="2" y="14" width="4" height="2" fill="#ffffff"/><rect x="6" y="14" width="2" height="2" fill="#f8f83c"/><rect x="8" y="14" width="2" height="2" fill="#c4c4b4"/><rect x="10" y="14" width="2" height="2" fill="#f8f83c"/><rect x="12" y="14" width="2" height="2" fill="#c4c4b4"/><rect x="14" y="14" width="2" height="2" fill="#f8f83c"/><rect x="16" y="14" width="2" height="2" fill="#c4c4b4"/><rect x="18" y="14" width="2" height="2" fill="#f8f83c"/><rect x="20" y="14" width="2" height="2" fill="#c4c4b4"/><rect x="22" y="14" width="2" height="2" fill="#f8f83c"/><rect x="24" y="14" width="2" height="2" fill="#000000"/><rect x="26" y="14" width="4" height="2" fill="#888888"/><rect x="30" y="14" width="2" height="2" fill="#000000"/><rect x="2" y="16" width="2" height="2" fill="#888888"/><rect x="4" y="16" width="2" height="2" fill="#ffffff"/><rect x="6" y="16" width="2" height="2" fill="#c4c4b4"/><rect x="8" y="16" width="2" height="2" fill="#f8f83c"/><rect x="10" y="16" width="2" height="2" fill="#c4c4b4"/><rect x="12" y="16" width="2" height="2" fill="#f8f83c"/><rect x="14" y="16" width="2" height="2" fill="#c4c4b4"/><rect x="16" y="16" width="2" height="2" fill="#f8f83c"/><rect x="18" y="16" width="2" height="2" fill="#c4c4b4"/><rect x="20" y="16" width="2" height="2" fill="#f8f83c"/><rect x="22" y="16" width="2" height="2" fill="#c4c4b4"/><rect x="24" y="16" width="2" height="2" fill="#f8f83c"/><rect x="26" y="16" width="2" height="2" fill="#000000"/><rect x="28" y="16" width="2" height="2" fill="#888888"/><rect x="30" y="16" width="2" height="2" fill="#000000"/><rect x="2" y="18" width="2" height="2" fill="#888888"/><rect x="4" y="18" width="2" height="2" fill="#ffffff"/><rect x="6" y="18" width="2" height="2" fill="#f8f83c"/><rect x="8" y="18" width="2" height="2" fill="#c4c4b4"/><rect x="10" y="18" width="2" height="2" fill="#f8f83c"/><rect x="12" y="18" width="2" height="2" fill="#c4c4b4"/><rect x="14" y="18" width="2" height="2" fill="#f8f83c"/><rect x="16" y="18" width="2" height="2" fill="#c4c4b4"/><rect x="18" y="18" width="2" height="2" fill="#f8f83c"/><rect x="20" y="18" width="2" height="2" fill="#c4c4b4"/><rect x="22" y="18" width="2" height="2" fill="#f8f83c"/><rect x="24" y="18" width="2" height="2" fill="#c4c4b4"/><rect x="26" y="18" width="2" height="2" fill="#000000"/><rect x="28" y="18" width="2" height="2" fill="#888888"/><rect x="30" y="18" width="2" height="2" fill="#000000"/><rect x="4" y="20" width="2" height="2" fill="#888888"/><rect x="6" y="20" width="2" height="2" fill="#ffffff"/><rect x="8" y="20" width="2" height="2" fill="#f8f83c"/><rect x="10" y="20" width="2" height="2" fill="#c4c4b4"/><rect x="12" y="20" width="2" height="2" fill="#f8f83c"/><rect x="14" y="20" width="2" height="2" fill="#c4c4b4"/><rect x="16" y="20" width="2" height="2" fill="#f8f83c"/><rect x="18" y="20" width="2" height="2" fill="#c4c4b4"/><rect x="20" y="20" width="2" height="2" fill="#f8f83c"/><rect x="22" y="20" width="2" height="2" fill="#c4c4b4"/><rect x="24" y="20" width="2" height="2" fill="#f8f83c"/><rect x="26" y="20" width="2" height="2" fill="#888888"/><rect x="28" y="20" width="4" height="2" fill="#000000"/><rect x="4" y="22" width="24" height="2" fill="#888888"/><rect x="28" y="22" width="4" height="2" fill="#000000"/><rect x="6" y="24" width="26" height="2" fill="#000000"/></svg>
<svg style="left:166px;top:325.5px" width="26" height="26"><rect x="0" y="0" width="24" height="24" fill="#fff"/><rect x="0" y="0" width="24" height="2" fill="#8b8b8b"/><rect x="0" y="0" width="2" height="24" fill="#8b8b8b"/><rect x="2" y="2" width="20" height="2" fill="#000"/><rect x="2" y="2" width="2" height="20" fill="#000"/><rect x="2" y="22" width="22" height="2" fill="#c8c8c8"/><rect x="22" y="2" width="2" height="22" fill="#c8c8c8"/><rect x="0" y="24" width="26" height="2" fill="#fff"/><rect x="24" y="0" width="2" height="26" fill="#fff"/><polygon points="6,10 8,10 8,12 10,12 10,14 12,14 12,12 14,12 14,10 16,10 16,8 18,8 18,6 20,6 20,12 18,12 18,14 16,14 16,16 14,16 14,18 12,18 12,20 10,20 10,18 8,18 8,16 6,16" fill="#000"/></svg>
<div class="t" style="left:195.00px;top:324.34px;font-size:25.00px;line-height:25.00px;letter-spacing:0.300px;color:#000;">Event</div>
<svg style="left:168px;top:359.2px" width="30" height="26" shape-rendering="crispEdges"><rect x="4" y="0" width="10" height="2" fill="#888888"/><rect x="2" y="2" width="2" height="2" fill="#888888"/><rect x="4" y="2" width="2" height="2" fill="#c4c4b4"/><rect x="6" y="2" width="2" height="2" fill="#f8f83c"/><rect x="8" y="2" width="2" height="2" fill="#c4c4b4"/><rect x="10" y="2" width="2" height="2" fill="#f8f83c"/><rect x="12" y="2" width="2" height="2" fill="#c4c4b4"/><rect x="14" y="2" width="2" height="2" fill="#888888"/><rect x="0" y="4" width="2" height="2" fill="#888888"/><rect x="2" y="4" width="2" height="2" fill="#c4c4b4"/><rect x="4" y="4" width="2" height="2" fill="#f8f83c"/><rect x="6" y="4" width="2" height="2" fill="#c4c4b4"/><rect x="8" y="4" width="2" height="2" fill="#f8f83c"/><rect x="10" y="4" width="2" height="2" fill="#c4c4b4"/><rect x="12" y="4" width="2" height="2" fill="#f8f83c"/><rect x="14" y="4" width="2" height="2" fill="#c4c4b4"/><rect x="16" y="4" width="12" height="2" fill="#888888"/><rect x="0" y="6" width="2" height="2" fill="#888888"/><rect x="2" y="6" width="24" height="2" fill="#ffffff"/><rect x="26" y="6" width="2" height="2" fill="#888888"/><rect x="28" y="6" width="2" height="2" fill="#000000"/><rect x="0" y="8" width="2" height="2" fill="#888888"/><rect x="2" y="8" width="2" height="2" fill="#ffffff"/><rect x="4" y="8" width="2" height="2" fill="#f8f83c"/><rect x="6" y="8" width="2" height="2" fill="#c4c4b4"/><rect x="8" y="8" width="2" height="2" fill="#f8f83c"/><rect x="10" y="8" width="2" height="2" fill="#c4c4b4"/><rect x="12" y="8" width="2" height="2" fill="#f8f83c"/><rect x="14" y="8" width="2" height="2" fill="#c4c4b4"/><rect x="16" y="8" width="2" height="2" fill="#f8f83c"/><rect x="18" y="8" width="2" height="2" fill="#c4c4b4"/><rect x="20" y="8" width="2" height="2" fill="#f8f83c"/><rect x="22" y="8" width="2" height="2" fill="#c4c4b4"/><rect x="24" y="8" width="2" height="2" fill="#f8f83c"/><rect x="26" y="8" width="2" height="2" fill="#888888"/><rect x="28" y="8" width="2" height="2" fill="#000000"/><rect x="0" y="10" width="2" height="2" fill="#888888"/><rect x="2" y="10" width="2" height="2" fill="#ffffff"/><rect x="4" y="10" width="2" height="2" fill="#c4c4b4"/><rect x="6" y="10" width="2" height="2" fill="#f8f83c"/><rect x="8" y="10" width="2" height="2" fill="#c4c4b4"/><rect x="10" y="10" width="2" height="2" fill="#f8f83c"/><rect x="12" y="10" width="2" height="2" fill="#c4c4b4"/><rect x="14" y="10" width="2" height="2" fill="#f8f83c"/><rect x="16" y="10" width="2" height="2" fill="#c4c4b4"/><rect x="18" y="10" width="2" height="2" fill="#f8f83c"/><rect x="20" y="10" width="2" height="2" fill="#c4c4b4"/><rect x="22" y="10" width="2" height="2" fill="#f8f83c"/><rect x="24" y="10" width="2" height="2" fill="#c4c4b4"/><rect x="26" y="10" width="2" height="2" fill="#888888"/><rect x="28" y="10" width="2" height="2" fill="#000000"/><rect x="0" y="12" width="2" height="2" fill="#888888"/><rect x="2" y="12" width="2" height="2" fill="#ffffff"/><rect x="4" y="12" width="2" height="2" fill="#f8f83c"/><rect x="6" y="12" width="2" height="2" fill="#c4c4b4"/><rect x="8" y="12" width="2" height="2" fill="#f8f83c"/><rect x="10" y="12" width="2" height="2" fill="#c4c4b4"/><rect x="12" y="12" width="2" height="2" fill="#f8f83c"/><rect x="14" y="12" width="2" height="2" fill="#c4c4b4"/><rect x="16" y="12" width="2" height="2" fill="#f8f83c"/><rect x="18" y="12" width="2" height="2" fill="#c4c4b4"/><rect x="20" y="12" width="2" height="2" fill="#f8f83c"/><rect x="22" y="12" width="2" height="2" fill="#c4c4b4"/><rect x="24" y="12" width="2" height="2" fill="#f8f83c"/><rect x="26" y="12" width="2" height="2" fill="#888888"/><rect x="28" y="12" width="2" height="2" fill="#000000"/><rect x="0" y="14" width="2" height="2" fill="#888888"/><rect x="2" y="14" width="2" height="2" fill="#ffffff"/><rect x="4" y="14" width="2" height="2" fill="#c4c4b4"/><rect x="6" y="14" width="2" height="2" fill="#f8f83c"/><rect x="8" y="14" width="2" height="2" fill="#c4c4b4"/><rect x="10" y="14" width="2" height="2" fill="#f8f83c"/><rect x="12" y="14" width="2" height="2" fill="#c4c4b4"/><rect x="14" y="14" width="2" height="2" fill="#f8f83c"/><rect x="16" y="14" width="2" height="2" fill="#c4c4b4"/><rect x="18" y="14" width="2" height="2" fill="#f8f83c"/><rect x="20" y="14" width="2" height="2" fill="#c4c4b4"/><rect x="22" y="14" width="2" height="2" fill="#f8f83c"/><rect x="24" y="14" width="2" height="2" fill="#c4c4b4"/><rect x="26" y="14" width="2" height="2" fill="#888888"/><rect x="28" y="14" width="2" height="2" fill="#000000"/><rect x="0" y="16" width="2" height="2" fill="#888888"/><rect x="2" y="16" width="2" height="2" fill="#ffffff"/><rect x="4" y="16" width="2" height="2" fill="#f8f83c"/><rect x="6" y="16" width="2" height="2" fill="#c4c4b4"/><rect x="8" y="16" width="2" height="2" fill="#f8f83c"/><rect x="10" y="16" width="2" height="2" fill="#c4c4b4"/><rect x="12" y="16" width="2" height="2" fill="#f8f83c"/><rect x="14" y="16" width="2" height="2" fill="#c4c4b4"/><rect x="16" y="16" width="2" height="2" fill="#f8f83c"/><rect x="18" y="16" width="2" height="2" fill="#c4c4b4"/><rect x="20" y="16" width="2" height="2" fill="#f8f83c"/><rect x="22" y="16" width="2" height="2" fill="#c4c4b4"/><rect x="24" y="16" width="2" height="2" fill="#f8f83c"/><rect x="26" y="16" width="2" height="2" fill="#888888"/><rect x="28" y="16" width="2" height="2" fill="#000000"/><rect x="0" y="18" width="2" height="2" fill="#888888"/><rect x="2" y="18" width="2" height="2" fill="#ffffff"/><rect x="4" y="18" width="2" height="2" fill="#c4c4b4"/><rect x="6" y="18" width="2" height="2" fill="#f8f83c"/><rect x="8" y="18" width="2" height="2" fill="#c4c4b4"/><rect x="10" y="18" width="2" height="2" fill="#f8f83c"/><rect x="12" y="18" width="2" height="2" fill="#c4c4b4"/><rect x="14" y="18" width="2" height="2" fill="#f8f83c"/><rect x="16" y="18" width="2" height="2" fill="#c4c4b4"/><rect x="18" y="18" width="2" height="2" fill="#f8f83c"/><rect x="20" y="18" width="2" height="2" fill="#c4c4b4"/><rect x="22" y="18" width="2" height="2" fill="#f8f83c"/><rect x="24" y="18" width="2" height="2" fill="#c4c4b4"/><rect x="26" y="18" width="2" height="2" fill="#888888"/><rect x="28" y="18" width="2" height="2" fill="#000000"/><rect x="0" y="20" width="2" height="2" fill="#888888"/><rect x="2" y="20" width="2" height="2" fill="#ffffff"/><rect x="4" y="20" width="2" height="2" fill="#f8f83c"/><rect x="6" y="20" width="2" height="2" fill="#c4c4b4"/><rect x="8" y="20" width="2" height="2" fill="#f8f83c"/><rect x="10" y="20" width="2" height="2" fill="#c4c4b4"/><rect x="12" y="20" width="2" height="2" fill="#f8f83c"/><rect x="14" y="20" width="2" height="2" fill="#c4c4b4"/><rect x="16" y="20" width="2" height="2" fill="#f8f83c"/><rect x="18" y="20" width="2" height="2" fill="#c4c4b4"/><rect x="20" y="20" width="2" height="2" fill="#f8f83c"/><rect x="22" y="20" width="2" height="2" fill="#c4c4b4"/><rect x="24" y="20" width="2" height="2" fill="#f8f83c"/><rect x="26" y="20" width="2" height="2" fill="#888888"/><rect x="28" y="20" width="2" height="2" fill="#000000"/><rect x="0" y="22" width="28" height="2" fill="#888888"/><rect x="28" y="22" width="2" height="2" fill="#000000"/><rect x="2" y="24" width="28" height="2" fill="#000000"/></svg>
<svg style="left:204px;top:361.2px" width="26" height="26"><rect x="0" y="0" width="24" height="24" fill="#fff"/><rect x="0" y="0" width="24" height="2" fill="#8b8b8b"/><rect x="0" y="0" width="2" height="24" fill="#8b8b8b"/><rect x="2" y="2" width="20" height="2" fill="#000"/><rect x="2" y="2" width="2" height="20" fill="#000"/><rect x="2" y="22" width="22" height="2" fill="#c8c8c8"/><rect x="22" y="2" width="2" height="22" fill="#c8c8c8"/><rect x="0" y="24" width="26" height="2" fill="#fff"/><rect x="24" y="0" width="2" height="26" fill="#fff"/><polygon points="6,10 8,10 8,12 10,12 10,14 12,14 12,12 14,12 14,10 16,10 16,8 18,8 18,6 20,6 20,12 18,12 18,14 16,14 16,16 14,16 14,18 12,18 12,20 10,20 10,18 8,18 8,16 6,16" fill="#000"/></svg>
<div class="t" style="left:233.00px;top:360.04px;font-size:25.00px;line-height:25.00px;letter-spacing:0.018px;color:#000;">RandomColors</div>
<div style="left:407px;top:366.2px;width:11px;height:11px;border:2px solid #000;background:#fff"></div>
<svg style="left:168px;top:395px" width="30" height="26" shape-rendering="crispEdges"><rect x="4" y="0" width="10" height="2" fill="#888888"/><rect x="2" y="2" width="2" height="2" fill="#888888"/><rect x="4" y="2" width="2" height="2" fill="#c4c4b4"/><rect x="6" y="2" width="2" height="2" fill="#f8f83c"/><rect x="8" y="2" width="2" height="2" fill="#c4c4b4"/><rect x="10" y="2" width="2" height="2" fill="#f8f83c"/><rect x="12" y="2" width="2" height="2" fill="#c4c4b4"/><rect x="14" y="2" width="2" height="2" fill="#888888"/><rect x="0" y="4" width="2" height="2" fill="#888888"/><rect x="2" y="4" width="2" height="2" fill="#c4c4b4"/><rect x="4" y="4" width="2" height="2" fill="#f8f83c"/><rect x="6" y="4" width="2" height="2" fill="#c4c4b4"/><rect x="8" y="4" width="2" height="2" fill="#f8f83c"/><rect x="10" y="4" width="2" height="2" fill="#c4c4b4"/><rect x="12" y="4" width="2" height="2" fill="#f8f83c"/><rect x="14" y="4" width="2" height="2" fill="#c4c4b4"/><rect x="16" y="4" width="12" height="2" fill="#888888"/><rect x="0" y="6" width="2" height="2" fill="#888888"/><rect x="2" y="6" width="24" height="2" fill="#ffffff"/><rect x="26" y="6" width="2" height="2" fill="#888888"/><rect x="28" y="6" width="2" height="2" fill="#000000"/><rect x="0" y="8" width="2" height="2" fill="#888888"/><rect x="2" y="8" width="2" height="2" fill="#ffffff"/><rect x="4" y="8" width="2" height="2" fill="#f8f83c"/><rect x="6" y="8" width="2" height="2" fill="#c4c4b4"/><rect x="8" y="8" width="2" height="2" fill="#f8f83c"/><rect x="10" y="8" width="2" height="2" fill="#c4c4b4"/><rect x="12" y="8" width="2" height="2" fill="#f8f83c"/><rect x="14" y="8" width="2" height="2" fill="#c4c4b4"/><rect x="16" y="8" width="2" height="2" fill="#f8f83c"/><rect x="18" y="8" width="2" height="2" fill="#c4c4b4"/><rect x="20" y="8" width="2" height="2" fill="#f8f83c"/><rect x="22" y="8" width="2" height="2" fill="#c4c4b4"/><rect x="24" y="8" width="2" height="2" fill="#f8f83c"/><rect x="26" y="8" width="2" height="2" fill="#888888"/><rect x="28" y="8" width="2" height="2" fill="#000000"/><rect x="0" y="10" width="2" height="2" fill="#888888"/><rect x="2" y="10" width="2" height="2" fill="#ffffff"/><rect x="4" y="10" width="2" height="2" fill="#c4c4b4"/><rect x="6" y="10" width="2" height="2" fill="#f8f83c"/><rect x="8" y="10" width="2" height="2" fill="#c4c4b4"/><rect x="10" y="10" width="2" height="2" fill="#f8f83c"/><rect x="12" y="10" width="2" height="2" fill="#c4c4b4"/><rect x="14" y="10" width="2" height="2" fill="#f8f83c"/><rect x="16" y="10" width="2" height="2" fill="#c4c4b4"/><rect x="18" y="10" width="2" height="2" fill="#f8f83c"/><rect x="20" y="10" width="2" height="2" fill="#c4c4b4"/><rect x="22" y="10" width="2" height="2" fill="#f8f83c"/><rect x="24" y="10" width="2" height="2" fill="#c4c4b4"/><rect x="26" y="10" width="2" height="2" fill="#888888"/><rect x="28" y="10" width="2" height="2" fill="#000000"/><rect x="0" y="12" width="2" height="2" fill="#888888"/><rect x="2" y="12" width="2" height="2" fill="#ffffff"/><rect x="4" y="12" width="2" height="2" fill="#f8f83c"/><rect x="6" y="12" width="2" height="2" fill="#c4c4b4"/><rect x="8" y="12" width="2" height="2" fill="#f8f83c"/><rect x="10" y="12" width="2" height="2" fill="#c4c4b4"/><rect x="12" y="12" width="2" height="2" fill="#f8f83c"/><rect x="14" y="12" width="2" height="2" fill="#c4c4b4"/><rect x="16" y="12" width="2" height="2" fill="#f8f83c"/><rect x="18" y="12" width="2" height="2" fill="#c4c4b4"/><rect x="20" y="12" width="2" height="2" fill="#f8f83c"/><rect x="22" y="12" width="2" height="2" fill="#c4c4b4"/><rect x="24" y="12" width="2" height="2" fill="#f8f83c"/><rect x="26" y="12" width="2" height="2" fill="#888888"/><rect x="28" y="12" width="2" height="2" fill="#000000"/><rect x="0" y="14" width="2" height="2" fill="#888888"/><rect x="2" y="14" width="2" height="2" fill="#ffffff"/><rect x="4" y="14" width="2" height="2" fill="#c4c4b4"/><rect x="6" y="14" width="2" height="2" fill="#f8f83c"/><rect x="8" y="14" width="2" height="2" fill="#c4c4b4"/><rect x="10" y="14" width="2" height="2" fill="#f8f83c"/><rect x="12" y="14" width="2" height="2" fill="#c4c4b4"/><rect x="14" y="14" width="2" height="2" fill="#f8f83c"/><rect x="16" y="14" width="2" height="2" fill="#c4c4b4"/><rect x="18" y="14" width="2" height="2" fill="#f8f83c"/><rect x="20" y="14" width="2" height="2" fill="#c4c4b4"/><rect x="22" y="14" width="2" height="2" fill="#f8f83c"/><rect x="24" y="14" width="2" height="2" fill="#c4c4b4"/><rect x="26" y="14" width="2" height="2" fill="#888888"/><rect x="28" y="14" width="2" height="2" fill="#000000"/><rect x="0" y="16" width="2" height="2" fill="#888888"/><rect x="2" y="16" width="2" height="2" fill="#ffffff"/><rect x="4" y="16" width="2" height="2" fill="#f8f83c"/><rect x="6" y="16" width="2" height="2" fill="#c4c4b4"/><rect x="8" y="16" width="2" height="2" fill="#f8f83c"/><rect x="10" y="16" width="2" height="2" fill="#c4c4b4"/><rect x="12" y="16" width="2" height="2" fill="#f8f83c"/><rect x="14" y="16" width="2" height="2" fill="#c4c4b4"/><rect x="16" y="16" width="2" height="2" fill="#f8f83c"/><rect x="18" y="16" width="2" height="2" fill="#c4c4b4"/><rect x="20" y="16" width="2" height="2" fill="#f8f83c"/><rect x="22" y="16" width="2" height="2" fill="#c4c4b4"/><rect x="24" y="16" width="2" height="2" fill="#f8f83c"/><rect x="26" y="16" width="2" height="2" fill="#888888"/><rect x="28" y="16" width="2" height="2" fill="#000000"/><rect x="0" y="18" width="2" height="2" fill="#888888"/><rect x="2" y="18" width="2" height="2" fill="#ffffff"/><rect x="4" y="18" width="2" height="2" fill="#c4c4b4"/><rect x="6" y="18" width="2" height="2" fill="#f8f83c"/><rect x="8" y="18" width="2" height="2" fill="#c4c4b4"/><rect x="10" y="18" width="2" height="2" fill="#f8f83c"/><rect x="12" y="18" width="2" height="2" fill="#c4c4b4"/><rect x="14" y="18" width="2" height="2" fill="#f8f83c"/><rect x="16" y="18" width="2" height="2" fill="#c4c4b4"/><rect x="18" y="18" width="2" height="2" fill="#f8f83c"/><rect x="20" y="18" width="2" height="2" fill="#c4c4b4"/><rect x="22" y="18" width="2" height="2" fill="#f8f83c"/><rect x="24" y="18" width="2" height="2" fill="#c4c4b4"/><rect x="26" y="18" width="2" height="2" fill="#888888"/><rect x="28" y="18" width="2" height="2" fill="#000000"/><rect x="0" y="20" width="2" height="2" fill="#888888"/><rect x="2" y="20" width="2" height="2" fill="#ffffff"/><rect x="4" y="20" width="2" height="2" fill="#f8f83c"/><rect x="6" y="20" width="2" height="2" fill="#c4c4b4"/><rect x="8" y="20" width="2" height="2" fill="#f8f83c"/><rect x="10" y="20" width="2" height="2" fill="#c4c4b4"/><rect x="12" y="20" width="2" height="2" fill="#f8f83c"/><rect x="14" y="20" width="2" height="2" fill="#c4c4b4"/><rect x="16" y="20" width="2" height="2" fill="#f8f83c"/><rect x="18" y="20" width="2" height="2" fill="#c4c4b4"/><rect x="20" y="20" width="2" height="2" fill="#f8f83c"/><rect x="22" y="20" width="2" height="2" fill="#c4c4b4"/><rect x="24" y="20" width="2" height="2" fill="#f8f83c"/><rect x="26" y="20" width="2" height="2" fill="#888888"/><rect x="28" y="20" width="2" height="2" fill="#000000"/><rect x="0" y="22" width="28" height="2" fill="#888888"/><rect x="28" y="22" width="2" height="2" fill="#000000"/><rect x="2" y="24" width="28" height="2" fill="#000000"/></svg>
<svg style="left:204px;top:397px" width="26" height="26"><rect x="0" y="0" width="24" height="24" fill="#fff"/><rect x="0" y="0" width="24" height="2" fill="#8b8b8b"/><rect x="0" y="0" width="2" height="24" fill="#8b8b8b"/><rect x="2" y="2" width="20" height="2" fill="#000"/><rect x="2" y="2" width="2" height="20" fill="#000"/><rect x="2" y="22" width="22" height="2" fill="#c8c8c8"/><rect x="22" y="2" width="2" height="22" fill="#c8c8c8"/><rect x="0" y="24" width="26" height="2" fill="#fff"/><rect x="24" y="0" width="2" height="26" fill="#fff"/><polygon points="6,10 8,10 8,12 10,12 10,14 12,14 12,12 14,12 14,10 16,10 16,8 18,8 18,6 20,6 20,12 18,12 18,14 16,14 16,16 14,16 14,18 12,18 12,20 10,20 10,18 8,18 8,16 6,16" fill="#000"/></svg>
<div class="t" style="left:233.90px;top:395.84px;font-size:25.00px;line-height:25.00px;letter-spacing:0.463px;color:#000;">SmallBlue</div>
<div style="left:357px;top:401px;width:12px;height:12px;border:2px solid #000;background:#0022ee"></div>
<div style="left:235px;top:421px;width:115px;height:2px;background:#1a1aee;"></div>
<svg style="left:168px;top:431.5px" width="30" height="26" shape-rendering="crispEdges"><rect x="4" y="0" width="10" height="2" fill="#888888"/><rect x="2" y="2" width="2" height="2" fill="#888888"/><rect x="4" y="2" width="2" height="2" fill="#c4c4b4"/><rect x="6" y="2" width="2" height="2" fill="#f8f83c"/><rect x="8" y="2" width="2" height="2" fill="#c4c4b4"/><rect x="10" y="2" width="2" height="2" fill="#f8f83c"/><rect x="12" y="2" width="2" height="2" fill="#c4c4b4"/><rect x="14" y="2" width="2" height="2" fill="#888888"/><rect x="0" y="4" width="2" height="2" fill="#888888"/><rect x="2" y="4" width="2" height="2" fill="#c4c4b4"/><rect x="4" y="4" width="2" height="2" fill="#f8f83c"/><rect x="6" y="4" width="2" height="2" fill="#c4c4b4"/><rect x="8" y="4" width="2" height="2" fill="#f8f83c"/><rect x="10" y="4" width="2" height="2" fill="#c4c4b4"/><rect x="12" y="4" width="2" height="2" fill="#f8f83c"/><rect x="14" y="4" width="2" height="2" fill="#c4c4b4"/><rect x="16" y="4" width="12" height="2" fill="#888888"/><rect x="0" y="6" width="2" height="2" fill="#888888"/><rect x="2" y="6" width="24" height="2" fill="#ffffff"/><rect x="26" y="6" width="2" height="2" fill="#888888"/><rect x="28" y="6" width="2" height="2" fill="#000000"/><rect x="0" y="8" width="2" height="2" fill="#888888"/><rect x="2" y="8" width="2" height="2" fill="#ffffff"/><rect x="4" y="8" width="2" height="2" fill="#f8f83c"/><rect x="6" y="8" width="2" height="2" fill="#c4c4b4"/><rect x="8" y="8" width="2" height="2" fill="#f8f83c"/><rect x="10" y="8" width="2" height="2" fill="#c4c4b4"/><rect x="12" y="8" width="2" height="2" fill="#f8f83c"/><rect x="14" y="8" width="2" height="2" fill="#c4c4b4"/><rect x="16" y="8" width="2" height="2" fill="#f8f83c"/><rect x="18" y="8" width="2" height="2" fill="#c4c4b4"/><rect x="20" y="8" width="2" height="2" fill="#f8f83c"/><rect x="22" y="8" width="2" height="2" fill="#c4c4b4"/><rect x="24" y="8" width="2" height="2" fill="#f8f83c"/><rect x="26" y="8" width="2" height="2" fill="#888888"/><rect x="28" y="8" width="2" height="2" fill="#000000"/><rect x="0" y="10" width="2" height="2" fill="#888888"/><rect x="2" y="10" width="2" height="2" fill="#ffffff"/><rect x="4" y="10" width="2" height="2" fill="#c4c4b4"/><rect x="6" y="10" width="2" height="2" fill="#f8f83c"/><rect x="8" y="10" width="2" height="2" fill="#c4c4b4"/><rect x="10" y="10" width="2" height="2" fill="#f8f83c"/><rect x="12" y="10" width="2" height="2" fill="#c4c4b4"/><rect x="14" y="10" width="2" height="2" fill="#f8f83c"/><rect x="16" y="10" width="2" height="2" fill="#c4c4b4"/><rect x="18" y="10" width="2" height="2" fill="#f8f83c"/><rect x="20" y="10" width="2" height="2" fill="#c4c4b4"/><rect x="22" y="10" width="2" height="2" fill="#f8f83c"/><rect x="24" y="10" width="2" height="2" fill="#c4c4b4"/><rect x="26" y="10" width="2" height="2" fill="#888888"/><rect x="28" y="10" width="2" height="2" fill="#000000"/><rect x="0" y="12" width="2" height="2" fill="#888888"/><rect x="2" y="12" width="2" height="2" fill="#ffffff"/><rect x="4" y="12" width="2" height="2" fill="#f8f83c"/><rect x="6" y="12" width="2" height="2" fill="#c4c4b4"/><rect x="8" y="12" width="2" height="2" fill="#f8f83c"/><rect x="10" y="12" width="2" height="2" fill="#c4c4b4"/><rect x="12" y="12" width="2" height="2" fill="#f8f83c"/><rect x="14" y="12" width="2" height="2" fill="#c4c4b4"/><rect x="16" y="12" width="2" height="2" fill="#f8f83c"/><rect x="18" y="12" width="2" height="2" fill="#c4c4b4"/><rect x="20" y="12" width="2" height="2" fill="#f8f83c"/><rect x="22" y="12" width="2" height="2" fill="#c4c4b4"/><rect x="24" y="12" width="2" height="2" fill="#f8f83c"/><rect x="26" y="12" width="2" height="2" fill="#888888"/><rect x="28" y="12" width="2" height="2" fill="#000000"/><rect x="0" y="14" width="2" height="2" fill="#888888"/><rect x="2" y="14" width="2" height="2" fill="#ffffff"/><rect x="4" y="14" width="2" height="2" fill="#c4c4b4"/><rect x="6" y="14" width="2" height="2" fill="#f8f83c"/><rect x="8" y="14" width="2" height="2" fill="#c4c4b4"/><rect x="10" y="14" width="2" height="2" fill="#f8f83c"/><rect x="12" y="14" width="2" height="2" fill="#c4c4b4"/><rect x="14" y="14" width="2" height="2" fill="#f8f83c"/><rect x="16" y="14" width="2" height="2" fill="#c4c4b4"/><rect x="18" y="14" width="2" height="2" fill="#f8f83c"/><rect x="20" y="14" width="2" height="2" fill="#c4c4b4"/><rect x="22" y="14" width="2" height="2" fill="#f8f83c"/><rect x="24" y="14" width="2" height="2" fill="#c4c4b4"/><rect x="26" y="14" width="2" height="2" fill="#888888"/><rect x="28" y="14" width="2" height="2" fill="#000000"/><rect x="0" y="16" width="2" height="2" fill="#888888"/><rect x="2" y="16" width="2" height="2" fill="#ffffff"/><rect x="4" y="16" width="2" height="2" fill="#f8f83c"/><rect x="6" y="16" width="2" height="2" fill="#c4c4b4"/><rect x="8" y="16" width="2" height="2" fill="#f8f83c"/><rect x="10" y="16" width="2" height="2" fill="#c4c4b4"/><rect x="12" y="16" width="2" height="2" fill="#f8f83c"/><rect x="14" y="16" width="2" height="2" fill="#c4c4b4"/><rect x="16" y="16" width="2" height="2" fill="#f8f83c"/><rect x="18" y="16" width="2" height="2" fill="#c4c4b4"/><rect x="20" y="16" width="2" height="2" fill="#f8f83c"/><rect x="22" y="16" width="2" height="2" fill="#c4c4b4"/><rect x="24" y="16" width="2" height="2" fill="#f8f83c"/><rect x="26" y="16" width="2" height="2" fill="#888888"/><rect x="28" y="16" width="2" height="2" fill="#000000"/><rect x="0" y="18" width="2" height="2" fill="#888888"/><rect x="2" y="18" width="2" height="2" fill="#ffffff"/><rect x="4" y="18" width="2" height="2" fill="#c4c4b4"/><rect x="6" y="18" width="2" height="2" fill="#f8f83c"/><rect x="8" y="18" width="2" height="2" fill="#c4c4b4"/><rect x="10" y="18" width="2" height="2" fill="#f8f83c"/><rect x="12" y="18" width="2" height="2" fill="#c4c4b4"/><rect x="14" y="18" width="2" height="2" fill="#f8f83c"/><rect x="16" y="18" width="2" height="2" fill="#c4c4b4"/><rect x="18" y="18" width="2" height="2" fill="#f8f83c"/><rect x="20" y="18" width="2" height="2" fill="#c4c4b4"/><rect x="22" y="18" width="2" height="2" fill="#f8f83c"/><rect x="24" y="18" width="2" height="2" fill="#c4c4b4"/><rect x="26" y="18" width="2" height="2" fill="#888888"/><rect x="28" y="18" width="2" height="2" fill="#000000"/><rect x="0" y="20" width="2" height="2" fill="#888888"/><rect x="2" y="20" width="2" height="2" fill="#ffffff"/><rect x="4" y="20" width="2" height="2" fill="#f8f83c"/><rect x="6" y="20" width="2" height="2" fill="#c4c4b4"/><rect x="8" y="20" width="2" height="2" fill="#f8f83c"/><rect x="10" y="20" width="2" height="2" fill="#c4c4b4"/><rect x="12" y="20" width="2" height="2" fill="#f8f83c"/><rect x="14" y="20" width="2" height="2" fill="#c4c4b4"/><rect x="16" y="20" width="2" height="2" fill="#f8f83c"/><rect x="18" y="20" width="2" height="2" fill="#c4c4b4"/><rect x="20" y="20" width="2" height="2" fill="#f8f83c"/><rect x="22" y="20" width="2" height="2" fill="#c4c4b4"/><rect x="24" y="20" width="2" height="2" fill="#f8f83c"/><rect x="26" y="20" width="2" height="2" fill="#888888"/><rect x="28" y="20" width="2" height="2" fill="#000000"/><rect x="0" y="22" width="28" height="2" fill="#888888"/><rect x="28" y="22" width="2" height="2" fill="#000000"/><rect x="2" y="24" width="28" height="2" fill="#000000"/></svg>
<svg style="left:204px;top:433.5px" width="26" height="26"><rect x="0" y="0" width="24" height="24" fill="#fff"/><rect x="0" y="0" width="24" height="2" fill="#8b8b8b"/><rect x="0" y="0" width="2" height="24" fill="#8b8b8b"/><rect x="2" y="2" width="20" height="2" fill="#000"/><rect x="2" y="2" width="2" height="20" fill="#000"/><rect x="2" y="22" width="22" height="2" fill="#c8c8c8"/><rect x="22" y="2" width="2" height="22" fill="#c8c8c8"/><rect x="0" y="24" width="26" height="2" fill="#fff"/><rect x="24" y="0" width="2" height="26" fill="#fff"/><polygon points="6,10 8,10 8,12 10,12 10,14 12,14 12,12 14,12 14,10 16,10 16,8 18,8 18,6 20,6 20,12 18,12 18,14 16,14 16,16 14,16 14,18 12,18 12,20 10,20 10,18 8,18 8,16 6,16" fill="#000"/></svg>
<div class="t" style="left:233.90px;top:432.34px;font-size:25.00px;line-height:25.00px;letter-spacing:0.243px;color:#000;">Spectrum</div>
<div style="left:349px;top:438.5px;width:11px;height:11px;border:2px solid #000;background:#fff"></div>
<div style="left:143px;top:358px;width:2px;height:88px;background:repeating-linear-gradient(180deg,#8b8b8b 0 2px,transparent 2px 6px)"></div>
<div style="left:145px;top:373.2px;width:21px;height:2px;background:repeating-linear-gradient(90deg,#8b8b8b 0 2px,transparent 2px 6px)"></div>
<div style="left:145px;top:409px;width:21px;height:2px;background:repeating-linear-gradient(90deg,#8b8b8b 0 2px,transparent 2px 6px)"></div>
<div style="left:145px;top:445.5px;width:21px;height:2px;background:repeating-linear-gradient(90deg,#8b8b8b 0 2px,transparent 2px 6px)"></div>
<svg style="left:258px;top:780px" width="14" height="8" shape-rendering="crispEdges"><rect x="0" y="0" width="4" height="2" fill="#000000"/><rect x="10" y="0" width="4" height="2" fill="#000000"/><rect x="2" y="2" width="4" height="2" fill="#000000"/><rect x="8" y="2" width="4" height="2" fill="#000000"/><rect x="4" y="4" width="6" height="2" fill="#000000"/><rect x="6" y="6" width="2" height="2" fill="#000000"/></svg>
<svg style="left:458px;top:780px" width="14" height="8" shape-rendering="crispEdges"><rect x="0" y="0" width="4" height="2" fill="#000000"/><rect x="10" y="0" width="4" height="2" fill="#000000"/><rect x="2" y="2" width="4" height="2" fill="#000000"/><rect x="8" y="2" width="4" height="2" fill="#000000"/><rect x="4" y="4" width="6" height="2" fill="#000000"/><rect x="6" y="6" width="2" height="2" fill="#000000"/></svg>
<div style="left:278px;top:784px;width:178px;height:2px;background:repeating-linear-gradient(90deg,#8a8a82 0 2px,transparent 2px 6px)"></div>
<div style="left:118px;top:790px;width:456px;height:774px;overflow:hidden">
<div style="left:-118px;top:-790px;width:2272px;height:1804px">
<svg style="left:120px;top:796px" width="94" height="42"><polyline points="1,41 1,5 5,1 92,1" fill="none" stroke="#fff" stroke-width="2"/></svg>
<div style="left:212px;top:799px;width:2px;height:39px;background:#8b8b8b;"></div>
<svg style="left:216px;top:801px" width="101" height="37"><polyline points="1,36 1,5 5,1 99,1" fill="none" stroke="#fff" stroke-width="2"/></svg>
<div style="left:313px;top:804px;width:2px;height:32px;background:#8b8b8b;"></div>
<div class="t" style="left:225.40px;top:806.84px;font-size:25.00px;line-height:25.00px;letter-spacing:0.260px;color:#000;">Guides</div>
<svg style="left:319px;top:801px" width="114" height="37"><polyline points="1,36 1,5 5,1 112,1" fill="none" stroke="#fff" stroke-width="2"/></svg>
<div style="left:429px;top:804px;width:2px;height:32px;background:#8b8b8b;"></div>
<div class="t" style="left:328.70px;top:806.84px;font-size:25.00px;line-height:25.00px;letter-spacing:0.471px;color:#000;">Clipping</div>
<svg style="left:435px;top:801px" width="94" height="37"><polyline points="1,36 1,5 5,1 92,1" fill="none" stroke="#fff" stroke-width="2"/></svg>
<div style="left:525px;top:804px;width:2px;height:32px;background:#8b8b8b;"></div>
<div class="t" style="left:445.00px;top:806.84px;font-size:25.00px;line-height:25.00px;letter-spacing:0.460px;color:#000;">Extras</div>
<div class="t" style="left:131.40px;top:803.24px;font-size:25.00px;line-height:25.00px;letter-spacing:0.700px;color:#000;">Style</div>
<div style="left:214px;top:836px;width:360px;height:2px;background:#ffffff;"></div>
<div style="left:212px;top:796px;width:362px;height:2px;background:#ffffff;"></div>
<div style="left:572px;top:798px;width:2px;height:40px;background:#ffffff;"></div>
<div style="left:128px;top:845px;width:438px;height:2px;background:#ffffff;"></div>
<div style="left:128px;top:845px;width:2px;height:39px;background:#ffffff;"></div>
<div style="left:128px;top:884px;width:440px;height:2px;background:#8b8b8b;"></div>
<div style="left:566px;top:845px;width:2px;height:41px;background:#8b8b8b;"></div>
<div class="t" style="left:197.60px;top:851.04px;font-size:25.00px;line-height:25.00px;letter-spacing:0.729px;color:#14209a;">GLViewer [TGLSAViewer]</div>
<div class="t" style="left:129.40px;top:898.54px;font-size:25.00px;line-height:25.00px;letter-spacing:0.247px;color:#000;">Update behaviour</div>
<div style="left:343px;top:912px;width:62px;height:2px;background:#8b8b8b;"></div>
<div style="left:343px;top:914px;width:62px;height:1px;background:#ffffff;"></div>
<svg style="left:138px;top:934px" width="26" height="26"><rect x="0" y="0" width="24" height="24" fill="#fff"/><rect x="0" y="0" width="24" height="2" fill="#8b8b8b"/><rect x="0" y="0" width="2" height="24" fill="#8b8b8b"/><rect x="2" y="2" width="20" height="2" fill="#000"/><rect x="2" y="2" width="2" height="20" fill="#000"/><rect x="2" y="22" width="22" height="2" fill="#c8c8c8"/><rect x="22" y="2" width="2" height="22" fill="#c8c8c8"/><rect x="0" y="24" width="26" height="2" fill="#fff"/><rect x="24" y="0" width="2" height="26" fill="#fff"/></svg>
<div class="t" style="left:174.70px;top:933.54px;font-size:25.00px;line-height:25.00px;letter-spacing:0.282px;color:#000;">Ignore sizes</div>
<svg style="left:138px;top:970px" width="26" height="26"><rect x="0" y="0" width="24" height="24" fill="#fff"/><rect x="0" y="0" width="24" height="2" fill="#8b8b8b"/><rect x="0" y="0" width="2" height="24" fill="#8b8b8b"/><rect x="2" y="2" width="20" height="2" fill="#000"/><rect x="2" y="2" width="2" height="20" fill="#000"/><rect x="2" y="22" width="22" height="2" fill="#c8c8c8"/><rect x="22" y="2" width="2" height="22" fill="#c8c8c8"/><rect x="0" y="24" width="26" height="2" fill="#fff"/><rect x="24" y="0" width="2" height="26" fill="#fff"/><polygon points="6,10 8,10 8,12 10,12 10,14 12,14 12,12 14,12 14,10 16,10 16,8 18,8 18,6 20,6 20,12 18,12 18,14 16,14 16,16 14,16 14,18 12,18 12,20 10,20 10,18 8,18 8,16 6,16" fill="#000"/></svg>
<div class="t" style="left:175.00px;top:969.64px;font-size:25.00px;line-height:25.00px;letter-spacing:0.386px;color:#000;">Reset on update</div>
<div style="left:130px;top:1018px;width:434px;height:2px;background:#ffffff;"></div>
<div style="left:130px;top:1018px;width:2px;height:39px;background:#ffffff;"></div>
<div style="left:130px;top:1057px;width:436px;height:2px;background:#8b8b8b;"></div>
<div style="left:564px;top:1018px;width:2px;height:41px;background:#8b8b8b;"></div>
<div class="t" style="left:264.50px;top:1024.64px;font-size:25.00px;line-height:25.00px;letter-spacing:0.455px;color:#000;">Update Scene</div>
<div style="left:130px;top:1065px;width:434px;height:2px;background:#ffffff;"></div>
<div style="left:130px;top:1065px;width:2px;height:39px;background:#ffffff;"></div>
<div style="left:130px;top:1104px;width:436px;height:2px;background:#8b8b8b;"></div>
<div style="left:564px;top:1065px;width:2px;height:41px;background:#8b8b8b;"></div>
<div class="t" style="left:265.10px;top:1070.54px;font-size:25.00px;line-height:25.00px;letter-spacing:0.030px;color:#000;">Camera Home</div>
<div class="t" style="left:127.00px;top:1125.84px;font-size:25.00px;line-height:25.00px;letter-spacing:0.381px;color:#000;">Max HQ draw time:</div>
<div style="left:372px;top:1114px;width:100px;height:42px;background:#fff;"></div>
<div style="left:372px;top:1114px;width:100px;height:2px;background:#8b8b8b;"></div>
<div style="left:372px;top:1114px;width:2px;height:40px;background:#8b8b8b;"></div>
<div class="t" style="left:405.60px;top:1120.74px;font-size:25.00px;line-height:25.00px;letter-spacing:0.000px;color:#000;">5000</div>
<div style="left:473px;top:1114px;width:25px;height:2px;background:#ffffff;"></div>
<div style="left:473px;top:1114px;width:2px;height:18px;background:#ffffff;"></div>
<div style="left:473px;top:1132px;width:27px;height:2px;background:#8b8b8b;"></div>
<div style="left:498px;top:1114px;width:2px;height:20px;background:#8b8b8b;"></div>
<div style="left:473px;top:1135px;width:25px;height:2px;background:#ffffff;"></div>
<div style="left:473px;top:1135px;width:2px;height:19px;background:#ffffff;"></div>
<div style="left:473px;top:1154px;width:27px;height:2px;background:#8b8b8b;"></div>
<div style="left:498px;top:1135px;width:2px;height:21px;background:#8b8b8b;"></div>
<svg style="left:479.5px;top:1120px" width="14" height="7.5"><polygon points="0,7.5 14,7.5 7,0" fill="#000"/></svg>
<svg style="left:479.5px;top:1140px" width="14" height="7.5"><polygon points="0,0 14,0 7,7.5" fill="#000"/></svg>
<div class="t" style="left:127.00px;top:1169.34px;font-size:25.00px;line-height:25.00px;letter-spacing:0.344px;color:#000;">Max LQ draw time:</div>
<div style="left:372px;top:1158px;width:100px;height:42px;background:#fff;"></div>
<div style="left:372px;top:1158px;width:100px;height:2px;background:#8b8b8b;"></div>
<div style="left:372px;top:1158px;width:2px;height:40px;background:#8b8b8b;"></div>
<div class="t" style="left:419.30px;top:1164.54px;font-size:25.00px;line-height:25.00px;letter-spacing:0.100px;color:#000;">100</div>
<div style="left:473px;top:1158px;width:25px;height:2px;background:#ffffff;"></div>
<div style="left:473px;top:1158px;width:2px;height:18px;background:#ffffff;"></div>
<div style="left:473px;top:1176px;width:27px;height:2px;background:#8b8b8b;"></div>
<div style="left:498px;top:1158px;width:2px;height:20px;background:#8b8b8b;"></div>
<div style="left:473px;top:1179px;width:25px;height:2px;background:#ffffff;"></div>
<div style="left:473px;top:1179px;width:2px;height:19px;background:#ffffff;"></div>
<div style="left:473px;top:1198px;width:27px;height:2px;background:#8b8b8b;"></div>
<div style="left:498px;top:1179px;width:2px;height:21px;background:#8b8b8b;"></div>
<svg style="left:479.5px;top:1164px" width="14" height="7.5"><polygon points="0,7.5 14,7.5 7,0" fill="#000"/></svg>
<svg style="left:479.5px;top:1184px" width="14" height="7.5"><polygon points="0,0 14,0 7,7.5" fill="#000"/></svg>
<div class="t" style="left:133.70px;top:1225.84px;font-size:25.00px;line-height:25.00px;letter-spacing:0.180px;color:#000;">Clear Color</div>
<div style="left:277px;top:1223px;width:44px;height:33px;background:#000;box-shadow:inset 0 0 0 2px #777"></div>
<div style="left:334px;top:1217px;width:2px;height:39px;background:#8b8b8b;"></div>
<svg style="left:342px;top:1232px" width="12" height="7"><polygon points="0,0 12,0 6,7" fill="#000"/></svg>
<div style="left:134px;top:1282px;width:426px;height:148px;border:2px solid #8b8b8b;box-shadow:1px 1px 0 1px #fff, inset 1px 1px 0 1px #fff"></div>
<div style="left:150px;top:1276px;width:171px;height:14px;background:#e8e8e8;"></div>
<div class="t" style="left:154.60px;top:1268.24px;font-size:25.00px;line-height:25.00px;letter-spacing:0.323px;color:#000;">Light sources:</div>
<svg style="left:164px;top:1303px" width="26" height="26"><rect x="0" y="0" width="24" height="24" fill="#fff"/><rect x="0" y="0" width="24" height="2" fill="#8b8b8b"/><rect x="0" y="0" width="2" height="24" fill="#8b8b8b"/><rect x="2" y="2" width="20" height="2" fill="#000"/><rect x="2" y="2" width="2" height="20" fill="#000"/><rect x="2" y="22" width="22" height="2" fill="#c8c8c8"/><rect x="22" y="2" width="2" height="22" fill="#c8c8c8"/><rect x="0" y="24" width="26" height="2" fill="#fff"/><rect x="24" y="0" width="2" height="26" fill="#fff"/><polygon points="6,10 8,10 8,12 10,12 10,14 12,14 12,12 14,12 14,10 16,10 16,8 18,8 18,6 20,6 20,12 18,12 18,14 16,14 16,16 14,16 14,18 12,18 12,20 10,20 10,18 8,18 8,16 6,16" fill="#000"/></svg>
<svg style="left:348.5px;top:1303px" width="26" height="26"><rect x="0" y="0" width="24" height="24" fill="#fff"/><rect x="0" y="0" width="24" height="2" fill="#8b8b8b"/><rect x="0" y="0" width="2" height="24" fill="#8b8b8b"/><rect x="2" y="2" width="20" height="2" fill="#000"/><rect x="2" y="2" width="2" height="20" fill="#000"/><rect x="2" y="22" width="22" height="2" fill="#c8c8c8"/><rect x="22" y="2" width="2" height="22" fill="#c8c8c8"/><rect x="0" y="24" width="26" height="2" fill="#fff"/><rect x="24" y="0" width="2" height="26" fill="#fff"/><polygon points="6,10 8,10 8,12 10,12 10,14 12,14 12,12 14,12 14,10 16,10 16,8 18,8 18,6 20,6 20,12 18,12 18,14 16,14 16,16 14,16 14,18 12,18 12,20 10,20 10,18 8,18 8,16 6,16" fill="#000"/></svg>
<svg style="left:164px;top:1342.5px" width="26" height="26"><rect x="0" y="0" width="24" height="24" fill="#fff"/><rect x="0" y="0" width="24" height="2" fill="#8b8b8b"/><rect x="0" y="0" width="2" height="24" fill="#8b8b8b"/><rect x="2" y="2" width="20" height="2" fill="#000"/><rect x="2" y="2" width="2" height="20" fill="#000"/><rect x="2" y="22" width="22" height="2" fill="#c8c8c8"/><rect x="22" y="2" width="2" height="22" fill="#c8c8c8"/><rect x="0" y="24" width="26" height="2" fill="#fff"/><rect x="24" y="0" width="2" height="26" fill="#fff"/><polygon points="6,10 8,10 8,12 10,12 10,14 12,14 12,12 14,12 14,10 16,10 16,8 18,8 18,6 20,6 20,12 18,12 18,14 16,14 16,16 14,16 14,18 12,18 12,20 10,20 10,18 8,18 8,16 6,16" fill="#000"/></svg>
<svg style="left:348.5px;top:1342.5px" width="26" height="26"><rect x="0" y="0" width="24" height="24" fill="#fff"/><rect x="0" y="0" width="24" height="2" fill="#8b8b8b"/><rect x="0" y="0" width="2" height="24" fill="#8b8b8b"/><rect x="2" y="2" width="20" height="2" fill="#000"/><rect x="2" y="2" width="2" height="20" fill="#000"/><rect x="2" y="22" width="22" height="2" fill="#c8c8c8"/><rect x="22" y="2" width="2" height="22" fill="#c8c8c8"/><rect x="0" y="24" width="26" height="2" fill="#fff"/><rect x="24" y="0" width="2" height="26" fill="#fff"/><polygon points="6,10 8,10 8,12 10,12 10,14 12,14 12,12 14,12 14,10 16,10 16,8 18,8 18,6 20,6 20,12 18,12 18,14 16,14 16,16 14,16 14,18 12,18 12,20 10,20 10,18 8,18 8,16 6,16" fill="#000"/></svg>
<svg style="left:164px;top:1382.5px" width="26" height="26"><rect x="0" y="0" width="24" height="24" fill="#fff"/><rect x="0" y="0" width="24" height="2" fill="#8b8b8b"/><rect x="0" y="0" width="2" height="24" fill="#8b8b8b"/><rect x="2" y="2" width="20" height="2" fill="#000"/><rect x="2" y="2" width="2" height="20" fill="#000"/><rect x="2" y="22" width="22" height="2" fill="#c8c8c8"/><rect x="22" y="2" width="2" height="22" fill="#c8c8c8"/><rect x="0" y="24" width="26" height="2" fill="#fff"/><rect x="24" y="0" width="2" height="26" fill="#fff"/><polygon points="6,10 8,10 8,12 10,12 10,14 12,14 12,12 14,12 14,10 16,10 16,8 18,8 18,6 20,6 20,12 18,12 18,14 16,14 16,16 14,16 14,18 12,18 12,20 10,20 10,18 8,18 8,16 6,16" fill="#000"/></svg>
<svg style="left:348.5px;top:1382.5px" width="26" height="26"><rect x="0" y="0" width="24" height="24" fill="#fff"/><rect x="0" y="0" width="24" height="2" fill="#8b8b8b"/><rect x="0" y="0" width="2" height="24" fill="#8b8b8b"/><rect x="2" y="2" width="20" height="2" fill="#000"/><rect x="2" y="2" width="2" height="20" fill="#000"/><rect x="2" y="22" width="22" height="2" fill="#c8c8c8"/><rect x="22" y="2" width="2" height="22" fill="#c8c8c8"/><rect x="0" y="24" width="26" height="2" fill="#fff"/><rect x="24" y="0" width="2" height="26" fill="#fff"/><polygon points="6,10 8,10 8,12 10,12 10,14 12,14 12,12 14,12 14,10 16,10 16,8 18,8 18,6 20,6 20,12 18,12 18,14 16,14 16,16 14,16 14,18 12,18 12,20 10,20 10,18 8,18 8,16 6,16" fill="#000"/></svg>
<div class="t" style="left:199.40px;top:1302.84px;font-size:25.00px;line-height:25.00px;letter-spacing:1.750px;color:#000;">Top</div>
<div class="t" style="left:198.00px;top:1342.54px;font-size:25.00px;line-height:25.00px;letter-spacing:0.867px;color:#000;">Left</div>
<div class="t" style="left:198.00px;top:1382.34px;font-size:25.00px;line-height:25.00px;letter-spacing:0.450px;color:#000;">Front</div>
<div class="t" style="left:385.00px;top:1302.84px;font-size:25.00px;line-height:25.00px;letter-spacing:0.800px;color:#000;">Bottom</div>
<div class="t" style="left:385.00px;top:1342.54px;font-size:25.00px;line-height:25.00px;letter-spacing:0.300px;color:#000;">Right</div>
<div class="t" style="left:385.90px;top:1382.34px;font-size:25.00px;line-height:25.00px;letter-spacing:0.186px;color:#000;">Specular</div>
<div class="t" style="left:127.00px;top:1466.14px;font-size:25.00px;line-height:25.00px;letter-spacing:0.350px;color:#000;">Point-size scale:</div>
<div style="left:364.3px;top:1454.5px;width:72.7px;height:41.5px;background:#fff;"></div>
<div style="left:364.3px;top:1454.5px;width:72.7px;height:2px;background:#8b8b8b;"></div>
<div style="left:364.3px;top:1454.5px;width:2px;height:39.5px;background:#8b8b8b;"></div>
<div class="t" style="left:389.30px;top:1460.04px;font-size:25.00px;line-height:25.00px;letter-spacing:0.800px;color:#000;">1.0</div>
<div style="left:437px;top:1454.5px;width:24.5px;height:2px;background:#ffffff;"></div>
<div style="left:437px;top:1454.5px;width:2px;height:17.5px;background:#ffffff;"></div>
<div style="left:437px;top:1472px;width:26.5px;height:2px;background:#8b8b8b;"></div>
<div style="left:461.5px;top:1454.5px;width:2px;height:19.5px;background:#8b8b8b;"></div>
<div style="left:437px;top:1475px;width:24.5px;height:2px;background:#ffffff;"></div>
<div style="left:437px;top:1475px;width:2px;height:19px;background:#ffffff;"></div>
<div style="left:437px;top:1494px;width:26.5px;height:2px;background:#8b8b8b;"></div>
<div style="left:461.5px;top:1475px;width:2px;height:21px;background:#8b8b8b;"></div>
<svg style="left:443.25px;top:1460.5px" width="14" height="7.5"><polygon points="0,7.5 14,7.5 7,0" fill="#000"/></svg>
<svg style="left:443.25px;top:1480px" width="14" height="7.5"><polygon points="0,0 14,0 7,7.5" fill="#000"/></svg>
<svg style="left:472px;top:1460px" width="26" height="26"><rect x="0" y="0" width="24" height="24" fill="#fff"/><rect x="0" y="0" width="24" height="2" fill="#8b8b8b"/><rect x="0" y="0" width="2" height="24" fill="#8b8b8b"/><rect x="2" y="2" width="20" height="2" fill="#000"/><rect x="2" y="2" width="2" height="20" fill="#000"/><rect x="2" y="22" width="22" height="2" fill="#c8c8c8"/><rect x="22" y="2" width="2" height="22" fill="#c8c8c8"/><rect x="0" y="24" width="26" height="2" fill="#fff"/><rect x="24" y="0" width="2" height="26" fill="#fff"/></svg>
<div class="t" style="left:127.00px;top:1510.14px;font-size:25.00px;line-height:25.00px;letter-spacing:0.312px;color:#000;">Line-width scale:</div>
<div style="left:364.3px;top:1499px;width:72.7px;height:41px;background:#fff;"></div>
<div style="left:364.3px;top:1499px;width:72.7px;height:2px;background:#8b8b8b;"></div>
<div style="left:364.3px;top:1499px;width:2px;height:39px;background:#8b8b8b;"></div>
<div class="t" style="left:389.30px;top:1504.54px;font-size:25.00px;line-height:25.00px;letter-spacing:0.800px;color:#000;">1.0</div>
<div style="left:437px;top:1499px;width:24.5px;height:2px;background:#ffffff;"></div>
<div style="left:437px;top:1499px;width:2px;height:17.5px;background:#ffffff;"></div>
<div style="left:437px;top:1516.5px;width:26.5px;height:2px;background:#8b8b8b;"></div>
<div style="left:461.5px;top:1499px;width:2px;height:19.5px;background:#8b8b8b;"></div>
<div style="left:437px;top:1519.5px;width:24.5px;height:2px;background:#ffffff;"></div>
<div style="left:437px;top:1519.5px;width:2px;height:18.5px;background:#ffffff;"></div>
<div style="left:437px;top:1538px;width:26.5px;height:2px;background:#8b8b8b;"></div>
<div style="left:461.5px;top:1519.5px;width:2px;height:20.5px;background:#8b8b8b;"></div>
<svg style="left:443.25px;top:1505px" width="14" height="7.5"><polygon points="0,7.5 14,7.5 7,0" fill="#000"/></svg>
<svg style="left:443.25px;top:1524.5px" width="14" height="7.5"><polygon points="0,0 14,0 7,7.5" fill="#000"/></svg>
<svg style="left:472px;top:1504.5px" width="26" height="26"><rect x="0" y="0" width="24" height="24" fill="#fff"/><rect x="0" y="0" width="24" height="2" fill="#8b8b8b"/><rect x="0" y="0" width="2" height="24" fill="#8b8b8b"/><rect x="2" y="2" width="20" height="2" fill="#000"/><rect x="2" y="2" width="2" height="20" fill="#000"/><rect x="2" y="22" width="22" height="2" fill="#c8c8c8"/><rect x="22" y="2" width="2" height="22" fill="#c8c8c8"/><rect x="0" y="24" width="26" height="2" fill="#fff"/><rect x="24" y="0" width="2" height="26" fill="#fff"/></svg>
<div class="t" style="left:128.90px;top:1554.84px;font-size:25.00px;line-height:25.00px;letter-spacing:0.000px;color:#000;">Wireframe line width:</div>
<div style="left:364.3px;top:1542.6px;width:72.7px;height:41.4px;background:#fff;"></div>
<div style="left:364.3px;top:1542.6px;width:72.7px;height:2px;background:#8b8b8b;"></div>
<div style="left:364.3px;top:1542.6px;width:2px;height:39.4px;background:#8b8b8b;"></div>
<div class="t" style="left:389.30px;top:1548.84px;font-size:25.00px;line-height:25.00px;letter-spacing:0.800px;color:#000;">1.0</div>
<div style="left:437px;top:1542.6px;width:24.5px;height:2px;background:#ffffff;"></div>
<div style="left:437px;top:1542.6px;width:2px;height:17.4px;background:#ffffff;"></div>
<div style="left:437px;top:1560px;width:26.5px;height:2px;background:#8b8b8b;"></div>
<div style="left:461.5px;top:1542.6px;width:2px;height:19.4px;background:#8b8b8b;"></div>
<div style="left:437px;top:1563px;width:24.5px;height:2px;background:#ffffff;"></div>
<div style="left:437px;top:1563px;width:2px;height:19px;background:#ffffff;"></div>
<div style="left:437px;top:1582px;width:26.5px;height:2px;background:#8b8b8b;"></div>
<div style="left:461.5px;top:1563px;width:2px;height:21px;background:#8b8b8b;"></div>
<svg style="left:443.25px;top:1548.6px" width="14" height="7.5"><polygon points="0,7.5 14,7.5 7,0" fill="#000"/></svg>
<svg style="left:443.25px;top:1568px" width="14" height="7.5"><polygon points="0,0 14,0 7,7.5" fill="#000"/></svg>
</div></div>
<div style="left:120px;top:836px;width:2px;height:728px;background:#ffffff;"></div>
<svg style="left:582px;top:808px" width="14" height="8"><polygon points="0,8 14,8 7,0" fill="#000"/></svg>
<div style="left:574px;top:829px;width:28px;height:530px;border-left:1px solid #8b8b8b;border-top:2px solid #8b8b8b;border-right:2px solid #8b8b8b;border-bottom:2px solid #8b8b8b"></div>
<div style="left:582px;top:1090px;width:15px;height:2px;background:#8b8b8b;"></div>
<div style="left:582px;top:1096px;width:15px;height:2px;background:#8b8b8b;"></div>
<div style="left:582px;top:1102px;width:15px;height:2px;background:#8b8b8b;"></div>
<svg style="left:582px;top:1544px" width="14" height="8"><polygon points="0,0 14,0 7,8" fill="#000"/></svg>
<svg style="left:130px;top:1572px" width="8" height="14"><polygon points="8,0 8,14 0,7" fill="#000"/></svg>
<div style="left:152px;top:1565px;width:383px;height:25px;border:2px solid #8b8b8b"></div>
<div style="left:340px;top:1574px;width:2px;height:13px;background:#8b8b8b;"></div>
<div style="left:346px;top:1574px;width:2px;height:13px;background:#8b8b8b;"></div>
<div style="left:352px;top:1574px;width:2px;height:13px;background:#8b8b8b;"></div>
<svg style="left:554px;top:1572.5px" width="8" height="13.5"><polygon points="0,0 8,6.75 0,13.5" fill="#000"/></svg>
<svg style="left:616px;top:776px" width="8" height="14" shape-rendering="crispEdges"><rect x="0" y="0" width="2" height="2" fill="#000000"/><rect x="0" y="2" width="4" height="2" fill="#000000"/><rect x="2" y="4" width="4" height="2" fill="#000000"/><rect x="4" y="6" width="4" height="2" fill="#000000"/><rect x="2" y="8" width="4" height="2" fill="#000000"/><rect x="0" y="10" width="4" height="2" fill="#000000"/><rect x="0" y="12" width="2" height="2" fill="#000000"/></svg>
<svg style="left:616px;top:976px" width="8" height="14" shape-rendering="crispEdges"><rect x="0" y="0" width="2" height="2" fill="#000000"/><rect x="0" y="2" width="4" height="2" fill="#000000"/><rect x="2" y="4" width="4" height="2" fill="#000000"/><rect x="4" y="6" width="4" height="2" fill="#000000"/><rect x="2" y="8" width="4" height="2" fill="#000000"/><rect x="0" y="10" width="4" height="2" fill="#000000"/><rect x="0" y="12" width="2" height="2" fill="#000000"/></svg>
<div style="left:620px;top:794px;width:2px;height:176px;background:repeating-linear-gradient(180deg,#9a9a9a 0 2px,transparent 2px 6px)"></div>
<div style="left:628px;top:204px;width:2px;height:1190px;background:#ffffff;"></div>
<div style="left:628px;top:1450px;width:2px;height:152px;background:#ffffff;"></div>
<div style="left:628px;top:1600px;width:1528px;height:2px;background:#8b8b8b;"></div>
<div style="left:2154px;top:204px;width:2px;height:1190px;background:#8b8b8b;"></div>
<div style="left:2154px;top:1452px;width:2px;height:150px;background:#8b8b8b;"></div>
<svg style="left:628px;top:162px" width="130" height="42"><polyline points="1,41 1,5 5,1 127,1" fill="none" stroke="#fff" stroke-width="2"/></svg>
<div style="left:754px;top:166px;width:2px;height:38px;background:#8b8b8b;"></div>
<div style="left:756px;top:202px;width:1400px;height:2px;background:#ffffff;"></div>
<div class="t" style="left:640.50px;top:168.64px;font-size:25.00px;line-height:25.00px;letter-spacing:0.057px;color:#000;">Viewer 1</div>
<div style="left:632px;top:206px;width:66px;height:2px;background:#ffffff;"></div>
<div style="left:632px;top:206px;width:2px;height:40px;background:#ffffff;"></div>
<div style="left:632px;top:246px;width:68px;height:2px;background:#8b8b8b;"></div>
<div style="left:698px;top:206px;width:2px;height:42px;background:#8b8b8b;"></div>
<div class="t" style="left:639.30px;top:212.64px;font-size:25.00px;line-height:25.00px;letter-spacing:0.367px;color:#000;">Hide</div>
<div style="left:701px;top:206px;width:1349px;height:2px;background:#ffffff;"></div>
<div style="left:701px;top:206px;width:2px;height:40px;background:#ffffff;"></div>
<div style="left:701px;top:246px;width:1351px;height:2px;background:#8b8b8b;"></div>
<div style="left:2050px;top:206px;width:2px;height:42px;background:#8b8b8b;"></div>
<div class="t" style="left:1326.30px;top:212.84px;font-size:25.00px;line-height:25.00px;letter-spacing:-0.071px;color:#000;">Viewer 1</div>
<div style="left:2052px;top:206px;width:98px;height:2px;background:#ffffff;"></div>
<div style="left:2052px;top:206px;width:2px;height:40px;background:#ffffff;"></div>
<div style="left:2052px;top:246px;width:100px;height:2px;background:#8b8b8b;"></div>
<div style="left:2150px;top:206px;width:2px;height:42px;background:#8b8b8b;"></div>
<div class="t" style="left:2060.20px;top:212.84px;font-size:25.00px;line-height:25.00px;letter-spacing:0.383px;color:#000;">Actions</div>
<div style="left:632px;top:250px;width:1520px;height:2px;background:#ffffff;"></div>
<div style="left:632px;top:252px;width:1520px;height:6px;background:#80a0c0;"></div>
<div style="left:632px;top:256px;width:1520px;height:2px;background:#8b8b8b;"></div>
<div style="left:2150px;top:252px;width:2px;height:6px;background:#8b8b8b;"></div>
<div style="left:632px;top:258px;width:1520px;height:2px;background:#ffffff;"></div>
<div style="left:632px;top:260px;width:1520px;height:1130px;background:#000;"></div>
<div style="left:630px;top:1390px;width:1524px;height:2px;background:#ffffff;"></div>
<div style="left:630px;top:1392px;width:1524px;height:2px;background:#8b8b8b;"></div>
<div style="left:2152px;top:258px;width:2px;height:1134px;background:#ffffff;"></div>
<svg style="left:0px;top:0px" width="2272" height="1804" viewBox="0 0 2272 1804" shape-rendering="crispEdges"><g clip-path="url(#glclip)"><clipPath id="glclip"><rect x="632" y="260" width="1520" height="1130"/></clipPath><polygon points="1271.8,577.6 1244.0,592.4 1224.4,605.5 1198.2,634.9 1170.4,661.1 1155.6,687.3 1139.3,713.5 1129.5,749.5 1121.3,782.2 1118.0,811.7 1119.6,851.0 1124.5,880.4 1139.3,916.4 1152.4,945.9 1165.5,978.6 1198.2,1011.4 1224.4,1040.8 1247.3,1057.2 1271.8,1073.6 1513.1,1070.3 1539.3,1057.2 1558.9,1044.1 1578.6,1021.2 1598.2,1004.8 1614.6,988.4 1630.9,959.0 1647.3,926.3 1657.1,896.8 1663.7,867.3 1666.9,841.1 1665.3,811.7 1660.4,775.7 1653.8,742.9 1644.0,710.2 1630.9,684.0 1614.6,661.1 1594.9,641.5 1578.6,625.1 1558.9,605.5 1539.3,592.4 1513.1,577.6" fill="#0000dc"/><polygon points="1162.2,677.5 1149.1,693.8 1136.0,723.3 1127.8,769.1 1126.2,818.2 1131.1,867.3 1142.6,906.6 1162.2,939.3" fill="#0000c4"/><polygon points="1271.8,631.7 1248.9,638.2 1219.5,667.7 1191.7,680.8 1191.7,926.3 1204.7,968.8 1234.2,998.3 1271.8,991.7 1271.8,936.1 1253.8,916.4 1240.8,893.5 1230.9,867.3 1226.0,834.6 1226.0,801.9 1230.9,769.1 1244.0,742.9 1271.8,713.5" fill="#0000ec"/><polygon points="1271.8,713.5 1244.0,742.9 1230.9,769.1 1226.0,801.9 1237.5,769.1 1253.8,739.7" fill="#0a0aff"/><polygon points="1226.0,834.6 1230.9,867.3 1240.8,893.5 1253.8,916.4 1271.8,936.1 1271.8,952.4 1244.0,919.7 1227.7,880.4" fill="#0a0aff"/><polygon points="1191.7,680.8 1219.5,667.7 1219.5,710.2" fill="#5a5ac4"/><polygon points="1191.7,680.8 1219.5,710.2 1191.7,723.3" fill="#2a2ab0"/><polygon points="1162.2,677.5 1191.7,680.8 1162.2,710.2" fill="#0000b0"/><polygon points="1162.2,710.2 1191.7,680.8 1191.7,723.3" fill="#1a1aa4"/><polygon points="1162.2,710.2 1191.7,723.3 1162.2,736.4" fill="#00008c"/><polygon points="1162.2,736.4 1191.7,723.3 1191.7,782.2" fill="#4848b0"/><polygon points="1162.2,736.4 1191.7,782.2 1162.2,782.2" fill="#1a1aa0"/><polygon points="1162.2,782.2 1191.7,782.2 1191.7,841.1" fill="#1e1ea8"/><polygon points="1162.2,782.2 1191.7,841.1 1162.2,841.1" fill="#0a0a90"/><polygon points="1162.2,841.1 1191.7,883.7 1162.2,896.8" fill="#6262c8"/><polygon points="1162.2,841.1 1191.7,841.1 1191.7,883.7" fill="#1010a0"/><polygon points="1162.2,896.8 1191.7,883.7 1191.7,926.3" fill="#2020a8"/><polygon points="1162.2,896.8 1191.7,926.3 1162.2,939.3" fill="#000080"/><polygon points="1191.7,926.3 1204.7,968.8 1162.2,939.3" fill="#000088"/><polygon points="1204.7,968.8 1219.5,942.6 1247.3,968.8" fill="#4a4ac0"/><polygon points="1191.7,926.3 1219.5,942.6 1204.7,968.8" fill="#1a1aa8"/><polygon points="1234.2,998.3 1271.8,991.7 1271.8,1037.5 1253.8,1024.5" fill="#000070"/><polygon points="1247.3,968.8 1271.8,965.5 1271.8,991.7 1234.2,998.3" fill="#1c1ca8"/><polygon points="1219.5,667.7 1248.9,638.2 1248.9,680.8" fill="#1a1aa8"/><polygon points="1248.9,638.2 1271.8,631.7 1271.8,648.0" fill="#2020b0"/><polygon points="1219.5,710.2 1248.9,680.8 1253.8,716.8" fill="#0000d8"/><polygon points="1621.8,710.2 1637.5,723.3 1650.6,762.6 1655.5,818.2 1652.2,867.3 1640.8,906.6 1621.8,939.3" fill="#0000c0"/><polygon points="1513.1,652.9 1549.1,652.9 1578.6,682.4 1621.8,710.2 1593.3,726.6 1593.3,926.3 1563.8,939.3 1536.0,968.8 1513.1,965.5 1513.1,932.8 1536.0,913.2 1549.1,887.0 1555.6,860.8 1558.9,828.1 1557.3,795.3 1549.1,762.6 1532.7,736.4 1513.1,713.5" fill="#0000e8"/><polygon points="1513.1,713.5 1532.7,736.4 1549.1,762.6 1557.3,795.3 1545.8,769.1 1526.2,739.7" fill="#0a0aff"/><polygon points="1558.9,828.1 1555.6,860.8 1549.1,887.0 1536.0,913.2 1513.1,932.8 1513.1,949.2 1542.6,919.7 1562.2,873.9" fill="#0a0aff"/><polygon points="1513.1,618.6 1549.1,652.9 1513.1,652.9" fill="#5858c0"/><polygon points="1513.1,618.6 1536.0,623.5 1549.1,652.9" fill="#1a1a98"/><polygon points="1536.0,682.4 1578.6,682.4 1563.8,710.2" fill="#4a4ab8"/><polygon points="1578.6,682.4 1593.3,726.6 1563.8,710.2" fill="#2424a8"/><polygon points="1578.6,682.4 1621.8,710.2 1593.3,726.6" fill="#000080"/><polygon points="1593.3,726.6 1621.8,710.2 1621.8,782.2" fill="#10107a"/><polygon points="1593.3,726.6 1621.8,782.2 1593.3,808.4" fill="#1818a0"/><polygon points="1593.3,808.4 1621.8,782.2 1621.8,841.1" fill="#0a0a90"/><polygon points="1593.3,808.4 1621.8,841.1 1593.3,867.3" fill="#1a1aa4"/><polygon points="1593.3,867.3 1621.8,841.1 1621.8,896.8" fill="#2a2ab0"/><polygon points="1593.3,867.3 1621.8,896.8 1593.3,926.3" fill="#6464c8"/><polygon points="1593.3,926.3 1621.8,896.8 1621.8,939.3" fill="#000080"/><polygon points="1563.8,939.3 1593.3,926.3 1578.6,968.8" fill="#2a2ab0"/><polygon points="1536.0,968.8 1578.6,968.8 1549.1,998.3" fill="#1a1aa0"/><polygon points="1513.1,998.3 1549.1,998.3 1536.0,1024.5" fill="#4c4cbc"/><polygon points="1513.1,1024.5 1536.0,1024.5 1513.1,1053.9" fill="#1010a8"/><polygon points="1557.3,729.9 1593.3,726.6 1593.3,808.4 1565.5,775.7" fill="#0000d4"/><polygon points="1513.1,652.9 1536.0,682.4 1513.1,677.5" fill="#0a0ad8"/><polygon points="1536.0,968.8 1549.1,998.3 1513.1,998.3 1513.1,965.5" fill="#0000cc"/><polygon points="1271.8,713.5 1244.0,742.9 1230.9,769.1 1226.0,801.9 1226.0,834.6 1230.9,867.3 1240.8,893.5 1253.8,916.4 1271.8,936.1 1513.1,932.8 1536.0,913.2 1549.1,887.0 1555.6,860.8 1558.9,828.1 1557.3,795.3 1549.1,762.6 1532.7,736.4 1513.1,713.5" fill="#000000"/><polygon points="1391.6,372.0 1326.0,394.0 1282.0,445.0 1278.8,480.0 1273.5,526.0 1271.7,571.0 1268.0,690.0 1265.4,789.0 1265.4,800.0 1268.0,940.0 1272.5,1080.0 1275.0,1150.0 1282.3,1203.0 1320.8,1252.0 1391.6,1277.0 1464.5,1252.0 1503.0,1206.6 1508.0,1150.0 1512.0,1045.0 1516.4,905.0 1517.8,800.0 1517.8,789.0 1515.4,690.0 1513.6,585.0 1510.8,526.0 1508.3,491.0 1503.0,449.0 1461.0,395.0" fill="#1b2c86"/><polygon points="1391.6,372.2 1369.9,390.8 1324.3,427.6 1315.6,460.9 1321.5,499.5 1323.3,552.1 1313.8,694.0 1310.3,940.1 1310.3,905.2 1317.3,982.3 1322.6,1096.2 1313.8,1131.2 1326.1,1220.6 1369.9,1255.7 1391.6,1277.4" fill="#0a3f5c"/><polygon points="1391.6,372.2 1448.8,394.3 1468.0,459.2 1469.8,520.5 1461.0,550.3 1455.8,641.4 1475.0,743.1 1477.8,940.1 1473.3,931.4 1455.8,1006.8 1459.3,1094.4 1469.8,1129.5 1468.0,1185.6 1450.5,1255.7 1391.6,1277.4" fill="#4e5232"/><polygon points="1448.8,394.3 1468.0,459.2 1469.8,520.5 1461.0,550.3 1455.8,641.4 1475.0,743.1 1477.8,940.1 1473.3,931.4 1455.8,1006.8 1459.3,1094.4 1469.8,1129.5 1468.0,1185.6 1450.5,1255.7 1464.5,1252.2 1503.1,1206.6 1508.3,1150.5 1511.8,1045.4 1516.4,905.2 1517.8,800.0 1517.8,788.7 1515.4,690.5 1513.6,585.4 1510.8,525.8 1508.3,490.7 1503.1,448.7 1461.0,395.4" fill="#b09a22"/><polygon points="1315.3,691.2 1391.2,662.0 1391.2,983.2 1318.2,983.2 1306.6,901.5 1306.6,796.4" fill="#0a405e"/><polygon points="1315.3,691.2 1391.2,662.0 1391.2,714.6" fill="#053a50"/><polygon points="1306.6,796.4 1391.2,714.6 1391.2,796.4" fill="#0b3e5a"/><polygon points="1391.2,796.4 1306.6,901.5 1391.2,901.5" fill="#154b68"/><polygon points="1306.6,901.5 1391.2,901.5 1318.2,983.2" fill="#0a4058"/><polygon points="1391.2,714.6 1475.9,743.8 1391.2,796.4" fill="#4a4a2e"/><polygon points="1391.2,796.4 1475.9,743.8 1475.9,848.9" fill="#585230"/><polygon points="1391.2,796.4 1475.9,848.9 1391.2,901.5" fill="#5c5c3a"/><polygon points="1391.2,901.5 1475.9,848.9 1473.0,936.5" fill="#4c4e30"/><polygon points="1391.2,901.5 1473.0,936.5 1391.2,983.2" fill="#464c30"/><polygon points="1475.9,743.8 1516.8,697.1 1516.8,848.9 1475.9,848.9" fill="#b4a020"/><polygon points="1475.9,848.9 1516.8,848.9 1516.8,936.5 1473.0,936.5" fill="#ae9c20"/><polygon points="1265.7,796.4 1306.6,796.4 1306.6,901.5 1265.7,901.5" fill="#1d2b7c"/><polygon points="1326.1,394.3 1369.9,390.8 1391.6,372.2" fill="#0e78b4"/><polygon points="1326.1,394.3 1282.3,445.2 1324.3,427.6" fill="#1058c4"/><polygon points="1326.1,394.3 1369.9,390.8 1324.3,427.6" fill="#0a68b0"/><polygon points="1282.3,445.2 1278.8,480.2 1324.3,427.6" fill="#1a3aa4"/><polygon points="1324.3,427.6 1278.8,480.2 1315.6,460.9" fill="#1848b8"/><polygon points="1369.9,390.8 1391.6,372.2 1391.6,403.1" fill="#2a8a80"/><polygon points="1369.9,390.8 1391.6,403.1 1324.3,427.6" fill="#0a7090"/><polygon points="1324.3,427.6 1391.6,403.1 1391.6,425.9" fill="#0a6a8a"/><polygon points="1324.3,427.6 1391.6,425.9 1315.6,460.9" fill="#06587a"/><polygon points="1315.6,460.9 1391.6,425.9 1426.0,473.2" fill="#044e66"/><polygon points="1315.6,460.9 1426.0,473.2 1321.5,499.5" fill="#0a6a78"/><polygon points="1321.5,499.5 1426.0,473.2 1391.6,515.3" fill="#0a6478"/><polygon points="1321.5,499.5 1391.6,515.3 1323.3,552.1" fill="#064c68"/><polygon points="1323.3,552.1 1391.6,515.3 1391.6,564.3" fill="#044a60"/><polygon points="1323.3,552.1 1391.6,564.3 1366.4,611.6" fill="#053e5a"/><polygon points="1268.2,694.0 1366.4,613.4 1313.8,694.0" fill="#0c46b4"/><polygon points="1323.3,552.1 1366.4,611.6 1268.2,694.0" fill="#0a3870"/><polygon points="1278.8,480.2 1321.5,499.5 1273.5,525.8" fill="#1e3aa0"/><polygon points="1273.5,525.8 1321.5,499.5 1323.3,552.1" fill="#1a3896"/><polygon points="1273.5,525.8 1323.3,552.1 1271.7,571.3" fill="#1e3494"/><polygon points="1366.4,611.6 1391.6,664.2 1313.8,694.0" fill="#043a50"/><polygon points="1313.8,694.0 1391.6,664.2 1391.6,716.8" fill="#063e56"/><polygon points="1391.6,372.2 1461.0,395.4 1391.6,403.1" fill="#4a8a62"/><polygon points="1391.6,403.1 1450.5,395.4 1455.8,427.6" fill="#6a8a52"/><polygon points="1391.6,403.1 1455.8,427.6 1391.6,425.9" fill="#6a8050"/><polygon points="1448.8,394.3 1503.1,448.7 1468.0,459.2" fill="#d8a63a"/><polygon points="1468.0,459.2 1503.1,448.7 1508.3,490.7" fill="#c2a224"/><polygon points="1391.6,425.9 1455.8,427.6 1468.0,459.2" fill="#6e7c48"/><polygon points="1391.6,425.9 1468.0,459.2 1426.0,473.2" fill="#767a44"/><polygon points="1426.0,473.2 1468.0,459.2 1510.1,525.8" fill="#9a7a2a"/><polygon points="1426.0,473.2 1510.1,525.8 1469.8,520.5" fill="#d4a83a"/><polygon points="1391.6,515.3 1426.0,473.2 1469.8,520.5" fill="#6a703c"/><polygon points="1391.6,515.3 1469.8,520.5 1461.0,550.3" fill="#4e5e38"/><polygon points="1391.6,564.3 1461.0,550.3 1454.0,641.4" fill="#444e30"/><polygon points="1366.4,611.6 1391.6,564.3 1454.0,641.4" fill="#2a4c38"/><polygon points="1366.4,611.6 1454.0,641.4 1391.6,664.2" fill="#2c5440"/><polygon points="1461.0,550.3 1511.8,578.3 1501.3,620.4" fill="#a88c2a"/><polygon points="1455.8,641.4 1501.3,620.4 1515.4,690.5" fill="#a48428"/><polygon points="1501.3,620.4 1513.6,585.4 1515.4,690.5" fill="#c6b418"/><polygon points="1469.8,520.5 1510.8,525.8 1513.6,585.4" fill="#c8b020"/><polygon points="1461.0,550.3 1469.8,520.5 1513.6,585.4" fill="#b49c22"/><polygon points="1325.3,394.3 1391.9,372.4 1368.4,390.9" fill="#0a78a8"/><polygon points="1325.3,394.3 1368.4,390.9 1326.0,428.6 1282.3,446.1" fill="#1050b8"/><polygon points="1368.4,390.9 1391.9,403.0 1326.0,428.6" fill="#086a90"/><polygon points="1326.0,428.6 1391.9,403.0 1391.9,426.6" fill="#076284"/><polygon points="1282.3,446.1 1326.0,428.6 1280.9,481.1" fill="#1c2a7c"/><polygon points="1326.0,428.6 1315.9,460.9 1280.9,481.1" fill="#0f48b4"/><polygon points="1368.4,390.9 1391.9,372.4 1391.9,403.0" fill="#4a8060"/><polygon points="1282.3,1203.1 1326.1,1220.6 1320.8,1252.2" fill="#1258b8"/><polygon points="1320.8,1252.2 1326.1,1220.6 1369.9,1255.7" fill="#0e66b0"/><polygon points="1320.8,1252.2 1369.9,1255.7 1391.6,1277.4" fill="#0a78a8"/><polygon points="1369.9,1255.7 1391.6,1246.9 1391.6,1277.4" fill="#3a8a70"/><polygon points="1326.1,1220.6 1391.6,1220.6 1369.9,1255.7" fill="#08708a"/><polygon points="1313.8,1131.2 1391.6,1134.7 1426.0,1176.8" fill="#0a6c7c"/><polygon points="1313.8,1131.2 1426.0,1176.8 1326.1,1220.6" fill="#0a5a6a"/><polygon points="1326.1,1220.6 1426.0,1176.8 1391.6,1220.6" fill="#0a5668"/><polygon points="1322.6,1096.2 1391.6,1134.7 1313.8,1131.2" fill="#0a5c7a"/><polygon points="1275.3,1080.4 1322.6,1096.2 1313.8,1131.2" fill="#1a44a8"/><polygon points="1273.5,1003.3 1317.3,982.3 1366.4,1038.3" fill="#0c4eb4"/><polygon points="1273.5,1003.3 1366.4,1038.3 1322.6,1096.2" fill="#0a3278"/><polygon points="1366.4,1038.3 1391.6,1085.7 1322.6,1096.2" fill="#063e58"/><polygon points="1317.3,982.3 1391.6,985.8 1366.4,1038.3" fill="#043a50"/><polygon points="1366.4,1038.3 1391.6,985.8 1454.0,1006.8" fill="#325a40"/><polygon points="1366.4,1038.3 1454.0,1006.8 1391.6,1085.7" fill="#2a4a38"/><polygon points="1391.6,1085.7 1454.0,1006.8 1459.3,1094.4" fill="#44542e"/><polygon points="1391.6,1134.7 1459.3,1094.4 1469.8,1129.5" fill="#6a7040"/><polygon points="1391.6,1134.7 1469.8,1129.5 1426.0,1176.8" fill="#6a6c3e"/><polygon points="1426.0,1176.8 1469.8,1129.5 1468.0,1185.6" fill="#8a7a3a"/><polygon points="1391.6,1220.6 1426.0,1176.8 1468.0,1185.6" fill="#707a48"/><polygon points="1391.6,1220.6 1468.0,1185.6 1450.5,1255.7" fill="#6a8050"/><polygon points="1391.6,1246.9 1450.5,1255.7 1391.6,1277.4" fill="#5a8a5a"/><polygon points="1450.5,1255.7 1468.0,1185.6 1503.1,1206.6" fill="#cca83a"/><polygon points="1450.5,1255.7 1503.1,1206.6 1464.5,1252.2" fill="#d8a838"/><polygon points="1473.3,931.4 1515.4,975.3 1455.8,1006.8" fill="#9a7e28"/><polygon points="1455.8,1006.8 1515.4,975.3 1508.3,1038.3" fill="#a48c2a"/><polygon points="1459.3,1094.4 1508.3,1038.3 1510.1,1090.9" fill="#bc9e30"/><polygon points="1469.8,1129.5 1510.1,1090.9 1508.3,1150.5" fill="#c8b020"/><polygon points="1369.9,1255.7 1391.6,1220.6 1391.6,1246.9" fill="#147080"/><polygon points="1391.6,1220.6 1450.5,1255.7 1391.6,1246.9" fill="#5e7a52"/></g></svg>
<svg style="left:1286px;top:1398px" width="14" height="8" shape-rendering="crispEdges"><rect x="0" y="0" width="4" height="2" fill="#000000"/><rect x="10" y="0" width="4" height="2" fill="#000000"/><rect x="2" y="2" width="4" height="2" fill="#000000"/><rect x="8" y="2" width="4" height="2" fill="#000000"/><rect x="4" y="4" width="6" height="2" fill="#000000"/><rect x="6" y="6" width="2" height="2" fill="#000000"/></svg>
<svg style="left:1486px;top:1398px" width="14" height="8" shape-rendering="crispEdges"><rect x="0" y="0" width="4" height="2" fill="#000000"/><rect x="10" y="0" width="4" height="2" fill="#000000"/><rect x="2" y="2" width="4" height="2" fill="#000000"/><rect x="8" y="2" width="4" height="2" fill="#000000"/><rect x="4" y="4" width="6" height="2" fill="#000000"/><rect x="6" y="6" width="2" height="2" fill="#000000"/></svg>
<div style="left:1306px;top:1402px;width:178px;height:2px;background:repeating-linear-gradient(90deg,#9a9a9a 0 2px,transparent 2px 6px)"></div>
<svg style="left:628px;top:1410px" width="144" height="42"><polyline points="1,41 1,5 5,1 141,1" fill="none" stroke="#fff" stroke-width="2"/></svg>
<div style="left:768px;top:1414px;width:2px;height:38px;background:#8b8b8b;"></div>
<div style="left:770px;top:1450px;width:1386px;height:2px;background:#ffffff;"></div>
<div class="t" style="left:639.40px;top:1416.64px;font-size:25.00px;line-height:25.00px;letter-spacing:-0.067px;color:#000;">Command</div>
<div class="t" style="left:647.60px;top:1468.74px;font-size:25.00px;line-height:25.00px;letter-spacing:0.120px;color:#000;">Command (local):</div>
<div style="left:866px;top:1462px;width:1268px;height:42px;background:#fff;"></div>
<div style="left:866px;top:1462px;width:1266px;height:2px;background:#8b8b8b;"></div>
<div style="left:866px;top:1462px;width:2px;height:40px;background:#8b8b8b;"></div>
<div style="left:2102px;top:1465px;width:27px;height:32px;border:2px solid #8b8b8b;background:#e8e8e8"></div>
<svg style="left:2110px;top:1478px" width="14" height="8"><polygon points="0,0 14,0 7,8" fill="#000"/></svg>
<div style="left:638px;top:1518px;width:1508px;height:74px;background:#fff;"></div>
<div style="left:638px;top:1518px;width:1506px;height:2px;background:#8b8b8b;"></div>
<div style="left:638px;top:1518px;width:2px;height:72px;background:#8b8b8b;"></div>
<div style="left:640px;top:1520px;width:1504px;height:6px;background:#e8e8e8;"></div>
<div style="left:640px;top:1520px;width:6px;height:70px;background:#e8e8e8;"></div>
<div style="left:640px;top:1590px;width:1506px;height:2px;background:#ffffff;"></div>
<div style="left:112px;top:1606px;width:2046px;height:2px;background:#8b8b8b;"></div>
<div style="left:112px;top:1606px;width:2px;height:35px;background:#8b8b8b;"></div>
<div style="left:112px;top:1606px;width:669px;height:2px;background:#8b8b8b;"></div>
<div style="left:779px;top:1608px;width:2px;height:35px;background:#ffffff;"></div>
<div style="left:112px;top:1641px;width:669px;height:2px;background:#ffffff;"></div>
<div style="left:786px;top:1606px;width:2px;height:35px;background:#8b8b8b;"></div>
<div style="left:786px;top:1606px;width:199px;height:2px;background:#8b8b8b;"></div>
<div style="left:983px;top:1608px;width:2px;height:35px;background:#ffffff;"></div>
<div style="left:786px;top:1641px;width:199px;height:2px;background:#ffffff;"></div>
<div style="left:990px;top:1606px;width:2px;height:35px;background:#8b8b8b;"></div>
<div style="left:990px;top:1606px;width:199px;height:2px;background:#8b8b8b;"></div>
<div style="left:1187px;top:1608px;width:2px;height:35px;background:#ffffff;"></div>
<div style="left:990px;top:1641px;width:199px;height:2px;background:#ffffff;"></div>
<div style="left:1194px;top:1606px;width:2px;height:35px;background:#8b8b8b;"></div>
<div style="left:1194px;top:1606px;width:966px;height:2px;background:#8b8b8b;"></div>
<div style="left:2158px;top:1608px;width:2px;height:35px;background:#ffffff;"></div>
<div style="left:1194px;top:1641px;width:966px;height:2px;background:#ffffff;"></div>
<svg style="left:2130px;top:1616px" width="30" height="27"><g stroke="#9a9a9a" stroke-width="2"><line x1="6" y1="26" x2="28" y2="4"/><line x1="13" y1="26" x2="28" y2="11"/><line x1="20" y1="26" x2="28" y2="18"/></g><g stroke="#fff" stroke-width="1.5"><line x1="8" y1="26" x2="28" y2="6"/><line x1="15" y1="26" x2="28" y2="13"/></g></svg>
</div></body></html>
